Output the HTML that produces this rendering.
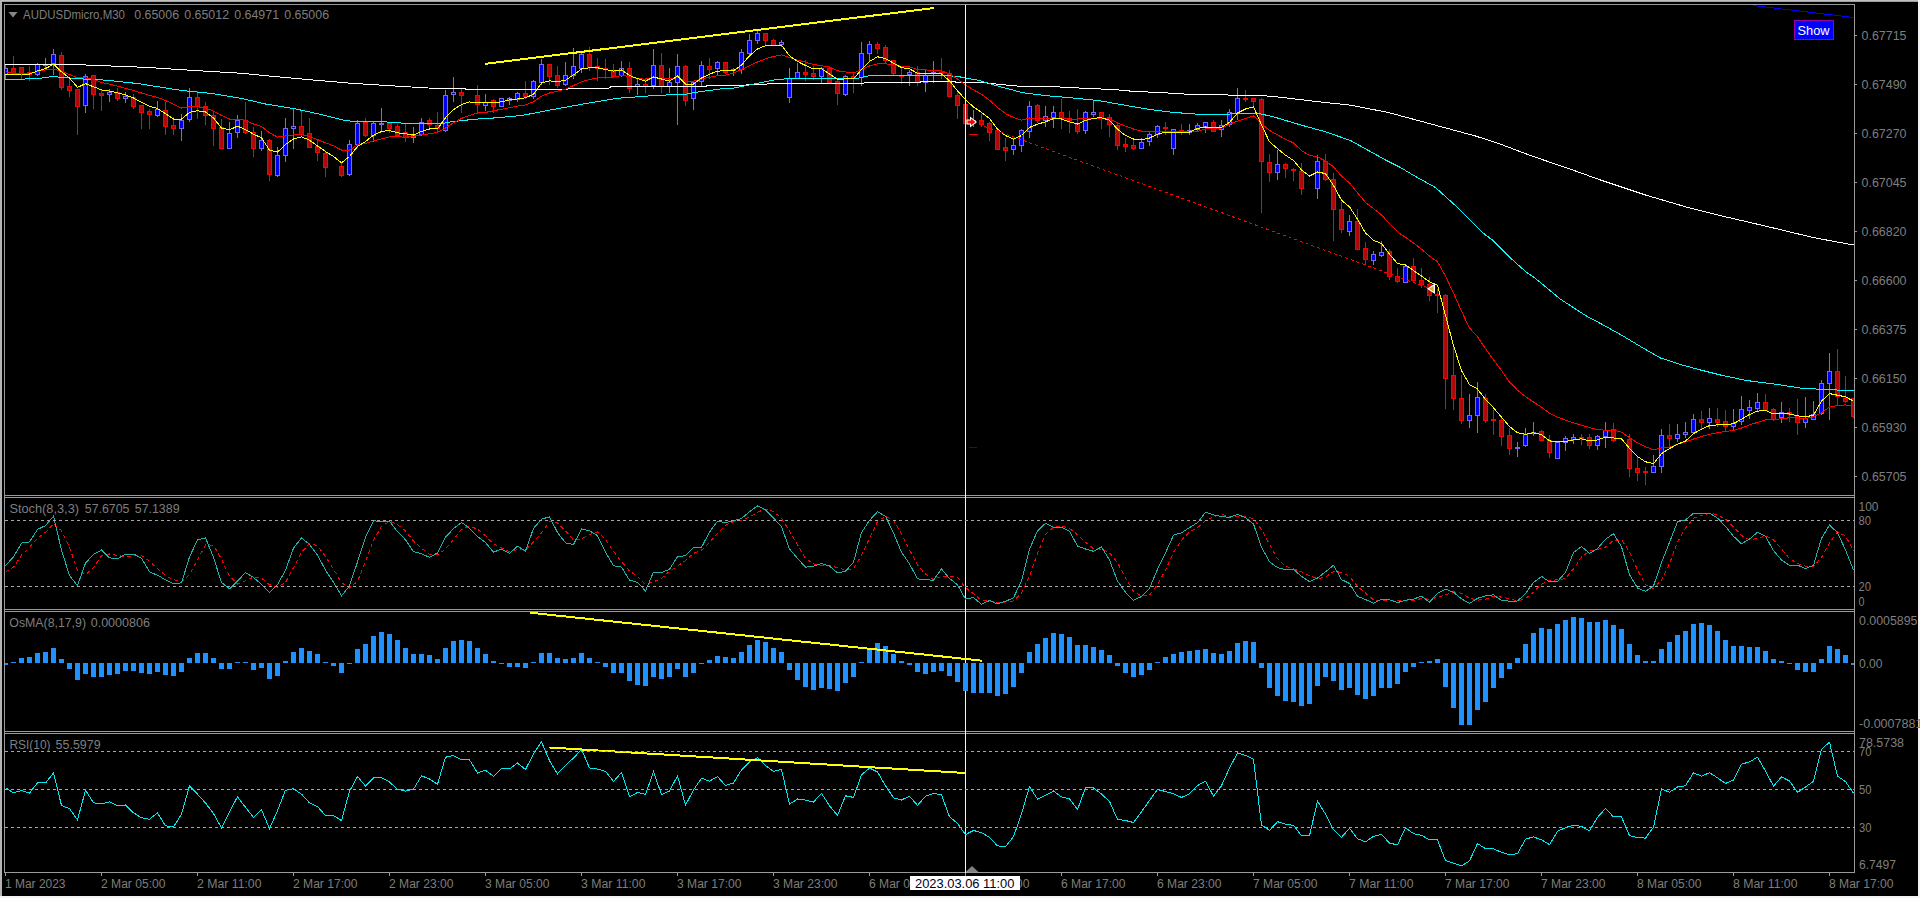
<!DOCTYPE html>
<html><head><meta charset="utf-8"><title>AUDUSDmicro,M30</title>
<style>html,body{margin:0;padding:0;background:#000;overflow:hidden}svg text{white-space:pre}</style></head>
<body>
<svg width="1920" height="898" viewBox="0 0 1920 898" style="display:block">
<rect width="1920" height="898" fill="#000"/>
<g shape-rendering="crispEdges">
<rect x="0" y="0" width="1920" height="1" fill="#c0c0c0"/>
<rect x="0" y="1" width="1920" height="1" fill="#a0a0a0"/>
<rect x="0" y="0" width="2" height="898" fill="#b4b4b4"/>
<rect x="1918" y="0" width="2" height="898" fill="#f4f4f4"/>
<rect x="0" y="896" width="1920" height="2" fill="#f4f4f4"/>
<rect x="4" y="4" width="1851" height="1" fill="#9a9a9a"/>
<rect x="4" y="4" width="1" height="869" fill="#9a9a9a"/>
<rect x="1854" y="4" width="1" height="869" fill="#9a9a9a"/>
<rect x="4" y="495" width="1851" height="1" fill="#9a9a9a"/>
<rect x="4" y="497" width="1851" height="1" fill="#9a9a9a"/>
<rect x="4" y="609" width="1851" height="1" fill="#9a9a9a"/>
<rect x="4" y="611" width="1851" height="1" fill="#9a9a9a"/>
<rect x="4" y="731" width="1851" height="1" fill="#9a9a9a"/>
<rect x="4" y="733" width="1851" height="1" fill="#9a9a9a"/>
<rect x="4" y="872" width="1851" height="1" fill="#9a9a9a"/>
</g>
<defs><clipPath id="cm"><rect x="5" y="5" width="1849" height="490"/></clipPath>
<clipPath id="c1"><rect x="5" y="498" width="1849" height="111"/></clipPath>
<clipPath id="c2"><rect x="5" y="612" width="1849" height="119"/></clipPath>
<clipPath id="c3"><rect x="5" y="734" width="1849" height="138"/></clipPath></defs>
<g clip-path="url(#cm)" shape-rendering="crispEdges">
<rect x="5" y="64" width="1" height="15" fill="#7b68ee"/>
<rect x="3" y="68" width="5" height="7" fill="#7b68ee"/>
<rect x="4" y="69" width="3" height="5" fill="#0000f0"/>
<rect x="13" y="56" width="1" height="18" fill="#ff0000"/>
<rect x="11" y="68" width="5" height="6" fill="#ff0000"/>
<rect x="12" y="69" width="3" height="4" fill="#b00808"/>
<rect x="21" y="67" width="1" height="12" fill="#ff0000"/>
<rect x="19" y="67" width="5" height="7" fill="#ff0000"/>
<rect x="20" y="68" width="3" height="5" fill="#b00808"/>
<rect x="29" y="66" width="1" height="15" fill="#ff0000"/>
<rect x="27" y="72" width="5" height="3" fill="#ff0000"/>
<rect x="28" y="73" width="3" height="1" fill="#b00808"/>
<rect x="37" y="63" width="1" height="13" fill="#7b68ee"/>
<rect x="35" y="64" width="5" height="11" fill="#7b68ee"/>
<rect x="36" y="65" width="3" height="9" fill="#0000f0"/>
<rect x="45" y="58" width="1" height="11" fill="#7b68ee"/>
<rect x="43" y="64" width="5" height="2" fill="#7b68ee"/>
<rect x="53" y="49" width="1" height="26" fill="#7b68ee"/>
<rect x="51" y="54" width="5" height="10" fill="#7b68ee"/>
<rect x="52" y="55" width="3" height="8" fill="#0000f0"/>
<rect x="61" y="52" width="1" height="38" fill="#ff0000"/>
<rect x="59" y="55" width="5" height="33" fill="#ff0000"/>
<rect x="60" y="56" width="3" height="31" fill="#b00808"/>
<rect x="69" y="79" width="1" height="18" fill="#ff0000"/>
<rect x="67" y="86" width="5" height="5" fill="#ff0000"/>
<rect x="68" y="87" width="3" height="3" fill="#b00808"/>
<rect x="77" y="89" width="1" height="46" fill="#ff0000"/>
<rect x="75" y="89" width="5" height="18" fill="#ff0000"/>
<rect x="76" y="90" width="3" height="16" fill="#b00808"/>
<rect x="85" y="74" width="1" height="39" fill="#7b68ee"/>
<rect x="83" y="76" width="5" height="30" fill="#7b68ee"/>
<rect x="84" y="77" width="3" height="28" fill="#0000f0"/>
<rect x="93" y="75" width="1" height="34" fill="#ff0000"/>
<rect x="91" y="75" width="5" height="20" fill="#ff0000"/>
<rect x="92" y="76" width="3" height="18" fill="#b00808"/>
<rect x="101" y="89" width="1" height="22" fill="#ff0000"/>
<rect x="99" y="93" width="5" height="3" fill="#ff0000"/>
<rect x="100" y="94" width="3" height="1" fill="#b00808"/>
<rect x="109" y="89" width="1" height="13" fill="#7b68ee"/>
<rect x="107" y="92" width="5" height="3" fill="#7b68ee"/>
<rect x="108" y="93" width="3" height="1" fill="#0000f0"/>
<rect x="117" y="88" width="1" height="13" fill="#ff0000"/>
<rect x="115" y="92" width="5" height="7" fill="#ff0000"/>
<rect x="116" y="93" width="3" height="5" fill="#b00808"/>
<rect x="125" y="92" width="1" height="11" fill="#7b68ee"/>
<rect x="123" y="96" width="5" height="3" fill="#7b68ee"/>
<rect x="124" y="97" width="3" height="1" fill="#0000f0"/>
<rect x="133" y="94" width="1" height="15" fill="#ff0000"/>
<rect x="131" y="97" width="5" height="10" fill="#ff0000"/>
<rect x="132" y="98" width="3" height="8" fill="#b00808"/>
<rect x="141" y="105" width="1" height="24" fill="#ff0000"/>
<rect x="139" y="105" width="5" height="8" fill="#ff0000"/>
<rect x="140" y="106" width="3" height="6" fill="#b00808"/>
<rect x="149" y="109" width="1" height="20" fill="#ff0000"/>
<rect x="147" y="111" width="5" height="4" fill="#ff0000"/>
<rect x="148" y="112" width="3" height="2" fill="#b00808"/>
<rect x="157" y="101" width="1" height="16" fill="#7b68ee"/>
<rect x="155" y="109" width="5" height="7" fill="#7b68ee"/>
<rect x="156" y="110" width="3" height="5" fill="#0000f0"/>
<rect x="165" y="102" width="1" height="33" fill="#ff0000"/>
<rect x="163" y="110" width="5" height="17" fill="#ff0000"/>
<rect x="164" y="111" width="3" height="15" fill="#b00808"/>
<rect x="173" y="117" width="1" height="18" fill="#ff0000"/>
<rect x="171" y="125" width="5" height="4" fill="#ff0000"/>
<rect x="172" y="126" width="3" height="2" fill="#b00808"/>
<rect x="181" y="114" width="1" height="27" fill="#7b68ee"/>
<rect x="179" y="120" width="5" height="9" fill="#7b68ee"/>
<rect x="180" y="121" width="3" height="7" fill="#0000f0"/>
<rect x="189" y="88" width="1" height="34" fill="#7b68ee"/>
<rect x="187" y="97" width="5" height="23" fill="#7b68ee"/>
<rect x="188" y="98" width="3" height="21" fill="#0000f0"/>
<rect x="197" y="91" width="1" height="28" fill="#ff0000"/>
<rect x="195" y="97" width="5" height="10" fill="#ff0000"/>
<rect x="196" y="98" width="3" height="8" fill="#b00808"/>
<rect x="205" y="102" width="1" height="23" fill="#ff0000"/>
<rect x="203" y="106" width="5" height="10" fill="#ff0000"/>
<rect x="204" y="107" width="3" height="8" fill="#b00808"/>
<rect x="213" y="112" width="1" height="34" fill="#ff0000"/>
<rect x="211" y="115" width="5" height="14" fill="#ff0000"/>
<rect x="212" y="116" width="3" height="12" fill="#b00808"/>
<rect x="221" y="119" width="1" height="30" fill="#ff0000"/>
<rect x="219" y="127" width="5" height="22" fill="#ff0000"/>
<rect x="220" y="128" width="3" height="20" fill="#b00808"/>
<rect x="229" y="122" width="1" height="27" fill="#7b68ee"/>
<rect x="227" y="133" width="5" height="16" fill="#7b68ee"/>
<rect x="228" y="134" width="3" height="14" fill="#0000f0"/>
<rect x="237" y="115" width="1" height="23" fill="#7b68ee"/>
<rect x="235" y="120" width="5" height="13" fill="#7b68ee"/>
<rect x="236" y="121" width="3" height="11" fill="#0000f0"/>
<rect x="245" y="102" width="1" height="32" fill="#ff0000"/>
<rect x="243" y="120" width="5" height="13" fill="#ff0000"/>
<rect x="244" y="121" width="3" height="11" fill="#b00808"/>
<rect x="253" y="127" width="1" height="30" fill="#ff0000"/>
<rect x="251" y="132" width="5" height="17" fill="#ff0000"/>
<rect x="252" y="133" width="3" height="15" fill="#b00808"/>
<rect x="261" y="131" width="1" height="20" fill="#7b68ee"/>
<rect x="259" y="140" width="5" height="9" fill="#7b68ee"/>
<rect x="260" y="141" width="3" height="7" fill="#0000f0"/>
<rect x="269" y="139" width="1" height="42" fill="#ff0000"/>
<rect x="267" y="140" width="5" height="35" fill="#ff0000"/>
<rect x="268" y="141" width="3" height="33" fill="#b00808"/>
<rect x="277" y="147" width="1" height="30" fill="#7b68ee"/>
<rect x="275" y="155" width="5" height="21" fill="#7b68ee"/>
<rect x="276" y="156" width="3" height="19" fill="#0000f0"/>
<rect x="285" y="118" width="1" height="44" fill="#7b68ee"/>
<rect x="283" y="128" width="5" height="28" fill="#7b68ee"/>
<rect x="284" y="129" width="3" height="26" fill="#0000f0"/>
<rect x="293" y="109" width="1" height="40" fill="#7b68ee"/>
<rect x="291" y="126" width="5" height="3" fill="#7b68ee"/>
<rect x="292" y="127" width="3" height="1" fill="#0000f0"/>
<rect x="301" y="110" width="1" height="26" fill="#ff0000"/>
<rect x="299" y="126" width="5" height="9" fill="#ff0000"/>
<rect x="300" y="127" width="3" height="7" fill="#b00808"/>
<rect x="309" y="118" width="1" height="30" fill="#ff0000"/>
<rect x="307" y="133" width="5" height="15" fill="#ff0000"/>
<rect x="308" y="134" width="3" height="13" fill="#b00808"/>
<rect x="317" y="139" width="1" height="22" fill="#ff0000"/>
<rect x="315" y="146" width="5" height="7" fill="#ff0000"/>
<rect x="316" y="147" width="3" height="5" fill="#b00808"/>
<rect x="325" y="152" width="1" height="25" fill="#ff0000"/>
<rect x="323" y="153" width="5" height="15" fill="#ff0000"/>
<rect x="324" y="154" width="3" height="13" fill="#b00808"/>
<rect x="341" y="162" width="1" height="15" fill="#ff0000"/>
<rect x="339" y="166" width="5" height="10" fill="#ff0000"/>
<rect x="340" y="167" width="3" height="8" fill="#b00808"/>
<rect x="349" y="140" width="1" height="36" fill="#7b68ee"/>
<rect x="347" y="144" width="5" height="31" fill="#7b68ee"/>
<rect x="348" y="145" width="3" height="29" fill="#0000f0"/>
<rect x="357" y="120" width="1" height="28" fill="#7b68ee"/>
<rect x="355" y="123" width="5" height="22" fill="#7b68ee"/>
<rect x="356" y="124" width="3" height="20" fill="#0000f0"/>
<rect x="365" y="118" width="1" height="19" fill="#ff0000"/>
<rect x="363" y="122" width="5" height="14" fill="#ff0000"/>
<rect x="364" y="123" width="3" height="12" fill="#b00808"/>
<rect x="373" y="122" width="1" height="20" fill="#7b68ee"/>
<rect x="371" y="123" width="5" height="13" fill="#7b68ee"/>
<rect x="372" y="124" width="3" height="11" fill="#0000f0"/>
<rect x="381" y="108" width="1" height="23" fill="#7b68ee"/>
<rect x="379" y="123" width="5" height="2" fill="#7b68ee"/>
<rect x="389" y="123" width="1" height="10" fill="#ff0000"/>
<rect x="387" y="123" width="5" height="6" fill="#ff0000"/>
<rect x="388" y="124" width="3" height="4" fill="#b00808"/>
<rect x="397" y="124" width="1" height="13" fill="#ff0000"/>
<rect x="395" y="126" width="5" height="10" fill="#ff0000"/>
<rect x="396" y="127" width="3" height="8" fill="#b00808"/>
<rect x="405" y="124" width="1" height="18" fill="#ff0000"/>
<rect x="403" y="132" width="5" height="6" fill="#ff0000"/>
<rect x="404" y="133" width="3" height="4" fill="#b00808"/>
<rect x="413" y="127" width="1" height="16" fill="#7b68ee"/>
<rect x="411" y="135" width="5" height="3" fill="#7b68ee"/>
<rect x="412" y="136" width="3" height="1" fill="#0000f0"/>
<rect x="421" y="118" width="1" height="18" fill="#7b68ee"/>
<rect x="419" y="122" width="5" height="13" fill="#7b68ee"/>
<rect x="420" y="123" width="3" height="11" fill="#0000f0"/>
<rect x="429" y="118" width="1" height="11" fill="#ff0000"/>
<rect x="427" y="120" width="5" height="5" fill="#ff0000"/>
<rect x="428" y="121" width="3" height="3" fill="#b00808"/>
<rect x="437" y="112" width="1" height="20" fill="#ff0000"/>
<rect x="435" y="125" width="5" height="4" fill="#ff0000"/>
<rect x="436" y="126" width="3" height="2" fill="#b00808"/>
<rect x="445" y="90" width="1" height="42" fill="#7b68ee"/>
<rect x="443" y="95" width="5" height="36" fill="#7b68ee"/>
<rect x="444" y="96" width="3" height="34" fill="#0000f0"/>
<rect x="453" y="77" width="1" height="25" fill="#7b68ee"/>
<rect x="451" y="92" width="5" height="3" fill="#7b68ee"/>
<rect x="452" y="93" width="3" height="1" fill="#0000f0"/>
<rect x="461" y="88" width="1" height="25" fill="#ff0000"/>
<rect x="459" y="92" width="5" height="4" fill="#ff0000"/>
<rect x="460" y="93" width="3" height="2" fill="#b00808"/>
<rect x="477" y="85" width="1" height="27" fill="#ff0000"/>
<rect x="475" y="95" width="5" height="10" fill="#ff0000"/>
<rect x="476" y="96" width="3" height="8" fill="#b00808"/>
<rect x="485" y="94" width="1" height="17" fill="#7b68ee"/>
<rect x="483" y="102" width="5" height="4" fill="#7b68ee"/>
<rect x="484" y="103" width="3" height="2" fill="#0000f0"/>
<rect x="493" y="99" width="1" height="14" fill="#ff0000"/>
<rect x="491" y="100" width="5" height="7" fill="#ff0000"/>
<rect x="492" y="101" width="3" height="5" fill="#b00808"/>
<rect x="501" y="98" width="1" height="9" fill="#7b68ee"/>
<rect x="499" y="98" width="5" height="9" fill="#7b68ee"/>
<rect x="500" y="99" width="3" height="7" fill="#0000f0"/>
<rect x="509" y="97" width="1" height="8" fill="#7b68ee"/>
<rect x="507" y="98" width="5" height="3" fill="#7b68ee"/>
<rect x="508" y="99" width="3" height="1" fill="#0000f0"/>
<rect x="517" y="92" width="1" height="10" fill="#7b68ee"/>
<rect x="515" y="93" width="5" height="7" fill="#7b68ee"/>
<rect x="516" y="94" width="3" height="5" fill="#0000f0"/>
<rect x="525" y="81" width="1" height="18" fill="#ff0000"/>
<rect x="523" y="93" width="5" height="4" fill="#ff0000"/>
<rect x="524" y="94" width="3" height="2" fill="#b00808"/>
<rect x="533" y="80" width="1" height="19" fill="#7b68ee"/>
<rect x="531" y="81" width="5" height="16" fill="#7b68ee"/>
<rect x="532" y="82" width="3" height="14" fill="#0000f0"/>
<rect x="541" y="59" width="1" height="26" fill="#7b68ee"/>
<rect x="539" y="64" width="5" height="19" fill="#7b68ee"/>
<rect x="540" y="65" width="3" height="17" fill="#0000f0"/>
<rect x="549" y="64" width="1" height="21" fill="#ff0000"/>
<rect x="547" y="64" width="5" height="13" fill="#ff0000"/>
<rect x="548" y="65" width="3" height="11" fill="#b00808"/>
<rect x="557" y="66" width="1" height="22" fill="#ff0000"/>
<rect x="555" y="75" width="5" height="11" fill="#ff0000"/>
<rect x="556" y="76" width="3" height="9" fill="#b00808"/>
<rect x="565" y="62" width="1" height="24" fill="#7b68ee"/>
<rect x="563" y="75" width="5" height="10" fill="#7b68ee"/>
<rect x="564" y="76" width="3" height="8" fill="#0000f0"/>
<rect x="573" y="48" width="1" height="31" fill="#7b68ee"/>
<rect x="571" y="66" width="5" height="10" fill="#7b68ee"/>
<rect x="572" y="67" width="3" height="8" fill="#0000f0"/>
<rect x="581" y="51" width="1" height="22" fill="#7b68ee"/>
<rect x="579" y="54" width="5" height="15" fill="#7b68ee"/>
<rect x="580" y="55" width="3" height="13" fill="#0000f0"/>
<rect x="589" y="47" width="1" height="24" fill="#ff0000"/>
<rect x="587" y="54" width="5" height="14" fill="#ff0000"/>
<rect x="588" y="55" width="3" height="12" fill="#b00808"/>
<rect x="597" y="58" width="1" height="23" fill="#ff0000"/>
<rect x="595" y="66" width="5" height="3" fill="#ff0000"/>
<rect x="596" y="67" width="3" height="1" fill="#b00808"/>
<rect x="605" y="59" width="1" height="20" fill="#ff0000"/>
<rect x="603" y="68" width="5" height="2" fill="#ff0000"/>
<rect x="613" y="64" width="1" height="14" fill="#ff0000"/>
<rect x="611" y="70" width="5" height="7" fill="#ff0000"/>
<rect x="612" y="71" width="3" height="5" fill="#b00808"/>
<rect x="621" y="61" width="1" height="16" fill="#7b68ee"/>
<rect x="619" y="68" width="5" height="8" fill="#7b68ee"/>
<rect x="620" y="69" width="3" height="6" fill="#0000f0"/>
<rect x="629" y="62" width="1" height="31" fill="#ff0000"/>
<rect x="627" y="68" width="5" height="21" fill="#ff0000"/>
<rect x="628" y="69" width="3" height="19" fill="#b00808"/>
<rect x="637" y="79" width="1" height="16" fill="#7b68ee"/>
<rect x="635" y="84" width="5" height="3" fill="#7b68ee"/>
<rect x="636" y="85" width="3" height="1" fill="#0000f0"/>
<rect x="645" y="78" width="1" height="15" fill="#ff0000"/>
<rect x="643" y="84" width="5" height="3" fill="#ff0000"/>
<rect x="644" y="85" width="3" height="1" fill="#b00808"/>
<rect x="653" y="49" width="1" height="40" fill="#7b68ee"/>
<rect x="651" y="65" width="5" height="21" fill="#7b68ee"/>
<rect x="652" y="66" width="3" height="19" fill="#0000f0"/>
<rect x="661" y="53" width="1" height="40" fill="#ff0000"/>
<rect x="659" y="65" width="5" height="22" fill="#ff0000"/>
<rect x="660" y="66" width="3" height="20" fill="#b00808"/>
<rect x="669" y="68" width="1" height="25" fill="#7b68ee"/>
<rect x="667" y="82" width="5" height="5" fill="#7b68ee"/>
<rect x="668" y="83" width="3" height="3" fill="#0000f0"/>
<rect x="677" y="54" width="1" height="71" fill="#7b68ee"/>
<rect x="675" y="66" width="5" height="17" fill="#7b68ee"/>
<rect x="676" y="67" width="3" height="15" fill="#0000f0"/>
<rect x="685" y="65" width="1" height="41" fill="#ff0000"/>
<rect x="683" y="66" width="5" height="35" fill="#ff0000"/>
<rect x="684" y="67" width="3" height="33" fill="#b00808"/>
<rect x="693" y="81" width="1" height="29" fill="#7b68ee"/>
<rect x="691" y="82" width="5" height="17" fill="#7b68ee"/>
<rect x="692" y="83" width="3" height="15" fill="#0000f0"/>
<rect x="701" y="61" width="1" height="25" fill="#7b68ee"/>
<rect x="699" y="65" width="5" height="17" fill="#7b68ee"/>
<rect x="700" y="66" width="3" height="15" fill="#0000f0"/>
<rect x="709" y="58" width="1" height="21" fill="#ff0000"/>
<rect x="707" y="66" width="5" height="4" fill="#ff0000"/>
<rect x="708" y="67" width="3" height="2" fill="#b00808"/>
<rect x="717" y="61" width="1" height="14" fill="#7b68ee"/>
<rect x="715" y="62" width="5" height="7" fill="#7b68ee"/>
<rect x="716" y="63" width="3" height="5" fill="#0000f0"/>
<rect x="725" y="62" width="1" height="12" fill="#ff0000"/>
<rect x="723" y="62" width="5" height="11" fill="#ff0000"/>
<rect x="724" y="63" width="3" height="9" fill="#b00808"/>
<rect x="733" y="68" width="1" height="8" fill="#7b68ee"/>
<rect x="731" y="69" width="5" height="2" fill="#7b68ee"/>
<rect x="741" y="49" width="1" height="25" fill="#7b68ee"/>
<rect x="739" y="52" width="5" height="18" fill="#7b68ee"/>
<rect x="740" y="53" width="3" height="16" fill="#0000f0"/>
<rect x="749" y="34" width="1" height="21" fill="#7b68ee"/>
<rect x="747" y="40" width="5" height="14" fill="#7b68ee"/>
<rect x="748" y="41" width="3" height="12" fill="#0000f0"/>
<rect x="757" y="31" width="1" height="13" fill="#7b68ee"/>
<rect x="755" y="33" width="5" height="8" fill="#7b68ee"/>
<rect x="756" y="34" width="3" height="6" fill="#0000f0"/>
<rect x="765" y="33" width="1" height="12" fill="#ff0000"/>
<rect x="763" y="33" width="5" height="8" fill="#ff0000"/>
<rect x="764" y="34" width="3" height="6" fill="#b00808"/>
<rect x="773" y="39" width="1" height="7" fill="#ff0000"/>
<rect x="771" y="40" width="5" height="6" fill="#ff0000"/>
<rect x="772" y="41" width="3" height="4" fill="#b00808"/>
<rect x="781" y="40" width="1" height="7" fill="#7b68ee"/>
<rect x="779" y="42" width="5" height="3" fill="#7b68ee"/>
<rect x="780" y="43" width="3" height="1" fill="#0000f0"/>
<rect x="789" y="68" width="1" height="35" fill="#7b68ee"/>
<rect x="787" y="78" width="5" height="20" fill="#7b68ee"/>
<rect x="788" y="79" width="3" height="18" fill="#0000f0"/>
<rect x="797" y="63" width="1" height="16" fill="#7b68ee"/>
<rect x="795" y="72" width="5" height="7" fill="#7b68ee"/>
<rect x="796" y="73" width="3" height="5" fill="#0000f0"/>
<rect x="805" y="60" width="1" height="21" fill="#ff0000"/>
<rect x="803" y="72" width="5" height="3" fill="#ff0000"/>
<rect x="804" y="73" width="3" height="1" fill="#b00808"/>
<rect x="813" y="66" width="1" height="14" fill="#ff0000"/>
<rect x="811" y="73" width="5" height="4" fill="#ff0000"/>
<rect x="812" y="74" width="3" height="2" fill="#b00808"/>
<rect x="821" y="67" width="1" height="16" fill="#7b68ee"/>
<rect x="819" y="68" width="5" height="9" fill="#7b68ee"/>
<rect x="820" y="69" width="3" height="7" fill="#0000f0"/>
<rect x="829" y="67" width="1" height="16" fill="#ff0000"/>
<rect x="827" y="68" width="5" height="15" fill="#ff0000"/>
<rect x="828" y="69" width="3" height="13" fill="#b00808"/>
<rect x="837" y="80" width="1" height="25" fill="#ff0000"/>
<rect x="835" y="81" width="5" height="13" fill="#ff0000"/>
<rect x="836" y="82" width="3" height="11" fill="#b00808"/>
<rect x="845" y="75" width="1" height="21" fill="#7b68ee"/>
<rect x="843" y="76" width="5" height="19" fill="#7b68ee"/>
<rect x="844" y="77" width="3" height="17" fill="#0000f0"/>
<rect x="853" y="72" width="1" height="21" fill="#ff0000"/>
<rect x="851" y="76" width="5" height="3" fill="#ff0000"/>
<rect x="852" y="77" width="3" height="1" fill="#b00808"/>
<rect x="861" y="42" width="1" height="44" fill="#7b68ee"/>
<rect x="859" y="53" width="5" height="25" fill="#7b68ee"/>
<rect x="860" y="54" width="3" height="23" fill="#0000f0"/>
<rect x="869" y="41" width="1" height="20" fill="#7b68ee"/>
<rect x="867" y="44" width="5" height="10" fill="#7b68ee"/>
<rect x="868" y="45" width="3" height="8" fill="#0000f0"/>
<rect x="877" y="42" width="1" height="12" fill="#ff0000"/>
<rect x="875" y="44" width="5" height="5" fill="#ff0000"/>
<rect x="876" y="45" width="3" height="3" fill="#b00808"/>
<rect x="885" y="45" width="1" height="19" fill="#ff0000"/>
<rect x="883" y="47" width="5" height="14" fill="#ff0000"/>
<rect x="884" y="48" width="3" height="12" fill="#b00808"/>
<rect x="893" y="60" width="1" height="15" fill="#ff0000"/>
<rect x="891" y="60" width="5" height="14" fill="#ff0000"/>
<rect x="892" y="61" width="3" height="12" fill="#b00808"/>
<rect x="901" y="68" width="1" height="16" fill="#ff0000"/>
<rect x="899" y="75" width="5" height="2" fill="#ff0000"/>
<rect x="909" y="70" width="1" height="16" fill="#7b68ee"/>
<rect x="907" y="72" width="5" height="3" fill="#7b68ee"/>
<rect x="908" y="73" width="3" height="1" fill="#0000f0"/>
<rect x="917" y="66" width="1" height="20" fill="#ff0000"/>
<rect x="915" y="72" width="5" height="11" fill="#ff0000"/>
<rect x="916" y="73" width="3" height="9" fill="#b00808"/>
<rect x="925" y="70" width="1" height="22" fill="#7b68ee"/>
<rect x="923" y="75" width="5" height="8" fill="#7b68ee"/>
<rect x="924" y="76" width="3" height="6" fill="#0000f0"/>
<rect x="933" y="61" width="1" height="22" fill="#7b68ee"/>
<rect x="931" y="72" width="5" height="2" fill="#7b68ee"/>
<rect x="941" y="58" width="1" height="21" fill="#ff0000"/>
<rect x="939" y="72" width="5" height="2" fill="#ff0000"/>
<rect x="949" y="70" width="1" height="27" fill="#ff0000"/>
<rect x="947" y="73" width="5" height="24" fill="#ff0000"/>
<rect x="948" y="74" width="3" height="22" fill="#b00808"/>
<rect x="957" y="93" width="1" height="26" fill="#ff0000"/>
<rect x="955" y="95" width="5" height="11" fill="#ff0000"/>
<rect x="956" y="96" width="3" height="9" fill="#b00808"/>
<rect x="965" y="104" width="1" height="21" fill="#ff0000"/>
<rect x="963" y="104" width="5" height="20" fill="#ff0000"/>
<rect x="964" y="105" width="3" height="18" fill="#b00808"/>
<rect x="973" y="110" width="1" height="17" fill="#7b68ee"/>
<rect x="971" y="120" width="5" height="3" fill="#7b68ee"/>
<rect x="972" y="121" width="3" height="1" fill="#0000f0"/>
<rect x="981" y="114" width="1" height="13" fill="#ff0000"/>
<rect x="979" y="120" width="5" height="5" fill="#ff0000"/>
<rect x="980" y="121" width="3" height="3" fill="#b00808"/>
<rect x="989" y="122" width="1" height="19" fill="#ff0000"/>
<rect x="987" y="123" width="5" height="10" fill="#ff0000"/>
<rect x="988" y="124" width="3" height="8" fill="#b00808"/>
<rect x="997" y="129" width="1" height="21" fill="#ff0000"/>
<rect x="995" y="130" width="5" height="20" fill="#ff0000"/>
<rect x="996" y="131" width="3" height="18" fill="#b00808"/>
<rect x="1005" y="138" width="1" height="23" fill="#ff0000"/>
<rect x="1003" y="147" width="5" height="4" fill="#ff0000"/>
<rect x="1004" y="148" width="3" height="2" fill="#b00808"/>
<rect x="1013" y="138" width="1" height="17" fill="#7b68ee"/>
<rect x="1011" y="145" width="5" height="5" fill="#7b68ee"/>
<rect x="1012" y="146" width="3" height="3" fill="#0000f0"/>
<rect x="1021" y="129" width="1" height="23" fill="#7b68ee"/>
<rect x="1019" y="130" width="5" height="16" fill="#7b68ee"/>
<rect x="1020" y="131" width="3" height="14" fill="#0000f0"/>
<rect x="1029" y="101" width="1" height="37" fill="#7b68ee"/>
<rect x="1027" y="106" width="5" height="26" fill="#7b68ee"/>
<rect x="1028" y="107" width="3" height="24" fill="#0000f0"/>
<rect x="1037" y="104" width="1" height="19" fill="#ff0000"/>
<rect x="1035" y="105" width="5" height="16" fill="#ff0000"/>
<rect x="1036" y="106" width="3" height="14" fill="#b00808"/>
<rect x="1045" y="106" width="1" height="21" fill="#7b68ee"/>
<rect x="1043" y="116" width="5" height="5" fill="#7b68ee"/>
<rect x="1044" y="117" width="3" height="3" fill="#0000f0"/>
<rect x="1053" y="106" width="1" height="22" fill="#7b68ee"/>
<rect x="1051" y="112" width="5" height="6" fill="#7b68ee"/>
<rect x="1052" y="113" width="3" height="4" fill="#0000f0"/>
<rect x="1061" y="99" width="1" height="30" fill="#ff0000"/>
<rect x="1059" y="112" width="5" height="7" fill="#ff0000"/>
<rect x="1060" y="113" width="3" height="5" fill="#b00808"/>
<rect x="1069" y="111" width="1" height="22" fill="#ff0000"/>
<rect x="1067" y="118" width="5" height="3" fill="#ff0000"/>
<rect x="1068" y="119" width="3" height="1" fill="#b00808"/>
<rect x="1077" y="109" width="1" height="25" fill="#ff0000"/>
<rect x="1075" y="123" width="5" height="9" fill="#ff0000"/>
<rect x="1076" y="124" width="3" height="7" fill="#b00808"/>
<rect x="1085" y="111" width="1" height="23" fill="#7b68ee"/>
<rect x="1083" y="112" width="5" height="19" fill="#7b68ee"/>
<rect x="1084" y="113" width="3" height="17" fill="#0000f0"/>
<rect x="1093" y="100" width="1" height="17" fill="#7b68ee"/>
<rect x="1091" y="112" width="5" height="3" fill="#7b68ee"/>
<rect x="1092" y="113" width="3" height="1" fill="#0000f0"/>
<rect x="1101" y="112" width="1" height="17" fill="#ff0000"/>
<rect x="1099" y="112" width="5" height="7" fill="#ff0000"/>
<rect x="1100" y="113" width="3" height="5" fill="#b00808"/>
<rect x="1109" y="114" width="1" height="23" fill="#ff0000"/>
<rect x="1107" y="117" width="5" height="8" fill="#ff0000"/>
<rect x="1108" y="118" width="3" height="6" fill="#b00808"/>
<rect x="1117" y="122" width="1" height="28" fill="#ff0000"/>
<rect x="1115" y="125" width="5" height="21" fill="#ff0000"/>
<rect x="1116" y="126" width="3" height="19" fill="#b00808"/>
<rect x="1125" y="138" width="1" height="14" fill="#ff0000"/>
<rect x="1123" y="144" width="5" height="3" fill="#ff0000"/>
<rect x="1124" y="145" width="3" height="1" fill="#b00808"/>
<rect x="1133" y="138" width="1" height="12" fill="#ff0000"/>
<rect x="1131" y="145" width="5" height="4" fill="#ff0000"/>
<rect x="1132" y="146" width="3" height="2" fill="#b00808"/>
<rect x="1141" y="138" width="1" height="11" fill="#7b68ee"/>
<rect x="1139" y="142" width="5" height="7" fill="#7b68ee"/>
<rect x="1140" y="143" width="3" height="5" fill="#0000f0"/>
<rect x="1149" y="132" width="1" height="14" fill="#7b68ee"/>
<rect x="1147" y="134" width="5" height="8" fill="#7b68ee"/>
<rect x="1148" y="135" width="3" height="6" fill="#0000f0"/>
<rect x="1157" y="125" width="1" height="13" fill="#7b68ee"/>
<rect x="1155" y="126" width="5" height="9" fill="#7b68ee"/>
<rect x="1156" y="127" width="3" height="7" fill="#0000f0"/>
<rect x="1165" y="122" width="1" height="13" fill="#ff0000"/>
<rect x="1163" y="127" width="5" height="2" fill="#ff0000"/>
<rect x="1173" y="129" width="1" height="26" fill="#7b68ee"/>
<rect x="1171" y="129" width="5" height="20" fill="#7b68ee"/>
<rect x="1172" y="130" width="3" height="18" fill="#0000f0"/>
<rect x="1181" y="124" width="1" height="11" fill="#ff0000"/>
<rect x="1179" y="130" width="5" height="3" fill="#ff0000"/>
<rect x="1180" y="131" width="3" height="1" fill="#b00808"/>
<rect x="1189" y="124" width="1" height="11" fill="#7b68ee"/>
<rect x="1187" y="130" width="5" height="3" fill="#7b68ee"/>
<rect x="1188" y="131" width="3" height="1" fill="#0000f0"/>
<rect x="1197" y="123" width="1" height="8" fill="#7b68ee"/>
<rect x="1195" y="125" width="5" height="5" fill="#7b68ee"/>
<rect x="1196" y="126" width="3" height="3" fill="#0000f0"/>
<rect x="1205" y="122" width="1" height="11" fill="#7b68ee"/>
<rect x="1203" y="122" width="5" height="5" fill="#7b68ee"/>
<rect x="1204" y="123" width="3" height="3" fill="#0000f0"/>
<rect x="1213" y="120" width="1" height="12" fill="#ff0000"/>
<rect x="1211" y="122" width="5" height="10" fill="#ff0000"/>
<rect x="1212" y="123" width="3" height="8" fill="#b00808"/>
<rect x="1221" y="120" width="1" height="17" fill="#7b68ee"/>
<rect x="1219" y="125" width="5" height="5" fill="#7b68ee"/>
<rect x="1220" y="126" width="3" height="3" fill="#0000f0"/>
<rect x="1229" y="109" width="1" height="18" fill="#7b68ee"/>
<rect x="1227" y="112" width="5" height="13" fill="#7b68ee"/>
<rect x="1228" y="113" width="3" height="11" fill="#0000f0"/>
<rect x="1237" y="88" width="1" height="32" fill="#7b68ee"/>
<rect x="1235" y="98" width="5" height="16" fill="#7b68ee"/>
<rect x="1236" y="99" width="3" height="14" fill="#0000f0"/>
<rect x="1245" y="90" width="1" height="12" fill="#ff0000"/>
<rect x="1243" y="98" width="5" height="2" fill="#ff0000"/>
<rect x="1253" y="98" width="1" height="9" fill="#ff0000"/>
<rect x="1251" y="98" width="5" height="4" fill="#ff0000"/>
<rect x="1252" y="99" width="3" height="2" fill="#b00808"/>
<rect x="1261" y="98" width="1" height="115" fill="#ff0000"/>
<rect x="1259" y="99" width="5" height="63" fill="#ff0000"/>
<rect x="1260" y="100" width="3" height="61" fill="#b00808"/>
<rect x="1269" y="154" width="1" height="28" fill="#ff0000"/>
<rect x="1267" y="162" width="5" height="11" fill="#ff0000"/>
<rect x="1268" y="163" width="3" height="9" fill="#b00808"/>
<rect x="1277" y="150" width="1" height="30" fill="#7b68ee"/>
<rect x="1275" y="164" width="5" height="9" fill="#7b68ee"/>
<rect x="1276" y="165" width="3" height="7" fill="#0000f0"/>
<rect x="1285" y="163" width="1" height="15" fill="#ff0000"/>
<rect x="1283" y="164" width="5" height="5" fill="#ff0000"/>
<rect x="1284" y="165" width="3" height="3" fill="#b00808"/>
<rect x="1293" y="168" width="1" height="13" fill="#ff0000"/>
<rect x="1291" y="169" width="5" height="2" fill="#ff0000"/>
<rect x="1301" y="163" width="1" height="32" fill="#ff0000"/>
<rect x="1299" y="171" width="5" height="18" fill="#ff0000"/>
<rect x="1300" y="172" width="3" height="16" fill="#b00808"/>
<rect x="1317" y="155" width="1" height="44" fill="#7b68ee"/>
<rect x="1315" y="161" width="5" height="28" fill="#7b68ee"/>
<rect x="1316" y="162" width="3" height="26" fill="#0000f0"/>
<rect x="1325" y="154" width="1" height="27" fill="#ff0000"/>
<rect x="1323" y="161" width="5" height="19" fill="#ff0000"/>
<rect x="1324" y="162" width="3" height="17" fill="#b00808"/>
<rect x="1333" y="173" width="1" height="68" fill="#ff0000"/>
<rect x="1331" y="179" width="5" height="31" fill="#ff0000"/>
<rect x="1332" y="180" width="3" height="29" fill="#b00808"/>
<rect x="1341" y="202" width="1" height="31" fill="#ff0000"/>
<rect x="1339" y="209" width="5" height="21" fill="#ff0000"/>
<rect x="1340" y="210" width="3" height="19" fill="#b00808"/>
<rect x="1349" y="215" width="1" height="21" fill="#7b68ee"/>
<rect x="1347" y="221" width="5" height="11" fill="#7b68ee"/>
<rect x="1348" y="222" width="3" height="9" fill="#0000f0"/>
<rect x="1357" y="209" width="1" height="41" fill="#ff0000"/>
<rect x="1355" y="221" width="5" height="29" fill="#ff0000"/>
<rect x="1356" y="222" width="3" height="27" fill="#b00808"/>
<rect x="1365" y="242" width="1" height="23" fill="#ff0000"/>
<rect x="1363" y="248" width="5" height="12" fill="#ff0000"/>
<rect x="1364" y="249" width="3" height="10" fill="#b00808"/>
<rect x="1373" y="251" width="1" height="14" fill="#7b68ee"/>
<rect x="1371" y="254" width="5" height="7" fill="#7b68ee"/>
<rect x="1372" y="255" width="3" height="5" fill="#0000f0"/>
<rect x="1381" y="241" width="1" height="16" fill="#7b68ee"/>
<rect x="1379" y="252" width="5" height="4" fill="#7b68ee"/>
<rect x="1380" y="253" width="3" height="2" fill="#0000f0"/>
<rect x="1389" y="249" width="1" height="31" fill="#ff0000"/>
<rect x="1387" y="251" width="5" height="26" fill="#ff0000"/>
<rect x="1388" y="252" width="3" height="24" fill="#b00808"/>
<rect x="1397" y="268" width="1" height="15" fill="#ff0000"/>
<rect x="1395" y="276" width="5" height="6" fill="#ff0000"/>
<rect x="1396" y="277" width="3" height="4" fill="#b00808"/>
<rect x="1405" y="265" width="1" height="18" fill="#7b68ee"/>
<rect x="1403" y="266" width="5" height="17" fill="#7b68ee"/>
<rect x="1404" y="267" width="3" height="15" fill="#0000f0"/>
<rect x="1413" y="258" width="1" height="25" fill="#ff0000"/>
<rect x="1411" y="266" width="5" height="15" fill="#ff0000"/>
<rect x="1412" y="267" width="3" height="13" fill="#b00808"/>
<rect x="1421" y="268" width="1" height="20" fill="#ff0000"/>
<rect x="1419" y="280" width="5" height="5" fill="#ff0000"/>
<rect x="1420" y="281" width="3" height="3" fill="#b00808"/>
<rect x="1429" y="277" width="1" height="24" fill="#ff0000"/>
<rect x="1427" y="284" width="5" height="12" fill="#ff0000"/>
<rect x="1428" y="285" width="3" height="10" fill="#b00808"/>
<rect x="1437" y="289" width="1" height="24" fill="#ff0000"/>
<rect x="1435" y="294" width="5" height="2" fill="#ff0000"/>
<rect x="1445" y="294" width="1" height="115" fill="#ff0000"/>
<rect x="1443" y="295" width="5" height="84" fill="#ff0000"/>
<rect x="1444" y="296" width="3" height="82" fill="#b00808"/>
<rect x="1453" y="344" width="1" height="66" fill="#ff0000"/>
<rect x="1451" y="375" width="5" height="24" fill="#ff0000"/>
<rect x="1452" y="376" width="3" height="22" fill="#b00808"/>
<rect x="1461" y="375" width="1" height="49" fill="#ff0000"/>
<rect x="1459" y="398" width="5" height="23" fill="#ff0000"/>
<rect x="1460" y="399" width="3" height="21" fill="#b00808"/>
<rect x="1469" y="394" width="1" height="34" fill="#7b68ee"/>
<rect x="1467" y="415" width="5" height="6" fill="#7b68ee"/>
<rect x="1468" y="416" width="3" height="4" fill="#0000f0"/>
<rect x="1477" y="382" width="1" height="51" fill="#7b68ee"/>
<rect x="1475" y="397" width="5" height="19" fill="#7b68ee"/>
<rect x="1476" y="398" width="3" height="17" fill="#0000f0"/>
<rect x="1485" y="394" width="1" height="29" fill="#ff0000"/>
<rect x="1483" y="398" width="5" height="23" fill="#ff0000"/>
<rect x="1484" y="399" width="3" height="21" fill="#b00808"/>
<rect x="1493" y="410" width="1" height="25" fill="#ff0000"/>
<rect x="1491" y="419" width="5" height="2" fill="#ff0000"/>
<rect x="1501" y="417" width="1" height="29" fill="#ff0000"/>
<rect x="1499" y="420" width="5" height="17" fill="#ff0000"/>
<rect x="1500" y="421" width="3" height="15" fill="#b00808"/>
<rect x="1509" y="428" width="1" height="27" fill="#ff0000"/>
<rect x="1507" y="435" width="5" height="14" fill="#ff0000"/>
<rect x="1508" y="436" width="3" height="12" fill="#b00808"/>
<rect x="1517" y="442" width="1" height="15" fill="#7b68ee"/>
<rect x="1515" y="447" width="5" height="2" fill="#7b68ee"/>
<rect x="1525" y="428" width="1" height="19" fill="#7b68ee"/>
<rect x="1523" y="434" width="5" height="12" fill="#7b68ee"/>
<rect x="1524" y="435" width="3" height="10" fill="#0000f0"/>
<rect x="1533" y="422" width="1" height="14" fill="#7b68ee"/>
<rect x="1531" y="432" width="5" height="2" fill="#7b68ee"/>
<rect x="1541" y="430" width="1" height="11" fill="#ff0000"/>
<rect x="1539" y="431" width="5" height="10" fill="#ff0000"/>
<rect x="1540" y="432" width="3" height="8" fill="#b00808"/>
<rect x="1549" y="435" width="1" height="23" fill="#ff0000"/>
<rect x="1547" y="440" width="5" height="13" fill="#ff0000"/>
<rect x="1548" y="441" width="3" height="11" fill="#b00808"/>
<rect x="1557" y="441" width="1" height="18" fill="#7b68ee"/>
<rect x="1555" y="442" width="5" height="17" fill="#7b68ee"/>
<rect x="1556" y="443" width="3" height="15" fill="#0000f0"/>
<rect x="1565" y="436" width="1" height="15" fill="#7b68ee"/>
<rect x="1563" y="438" width="5" height="5" fill="#7b68ee"/>
<rect x="1564" y="439" width="3" height="3" fill="#0000f0"/>
<rect x="1573" y="434" width="1" height="10" fill="#7b68ee"/>
<rect x="1571" y="437" width="5" height="3" fill="#7b68ee"/>
<rect x="1572" y="438" width="3" height="1" fill="#0000f0"/>
<rect x="1581" y="434" width="1" height="11" fill="#ff0000"/>
<rect x="1579" y="437" width="5" height="2" fill="#ff0000"/>
<rect x="1589" y="434" width="1" height="15" fill="#ff0000"/>
<rect x="1587" y="437" width="5" height="9" fill="#ff0000"/>
<rect x="1588" y="438" width="3" height="7" fill="#b00808"/>
<rect x="1597" y="435" width="1" height="15" fill="#7b68ee"/>
<rect x="1595" y="436" width="5" height="10" fill="#7b68ee"/>
<rect x="1596" y="437" width="3" height="8" fill="#0000f0"/>
<rect x="1605" y="422" width="1" height="26" fill="#7b68ee"/>
<rect x="1603" y="430" width="5" height="7" fill="#7b68ee"/>
<rect x="1604" y="431" width="3" height="5" fill="#0000f0"/>
<rect x="1613" y="423" width="1" height="19" fill="#ff0000"/>
<rect x="1611" y="429" width="5" height="12" fill="#ff0000"/>
<rect x="1612" y="430" width="3" height="10" fill="#b00808"/>
<rect x="1629" y="434" width="1" height="43" fill="#ff0000"/>
<rect x="1627" y="439" width="5" height="30" fill="#ff0000"/>
<rect x="1628" y="440" width="3" height="28" fill="#b00808"/>
<rect x="1637" y="456" width="1" height="25" fill="#ff0000"/>
<rect x="1635" y="468" width="5" height="5" fill="#ff0000"/>
<rect x="1636" y="469" width="3" height="3" fill="#b00808"/>
<rect x="1645" y="467" width="1" height="18" fill="#ff0000"/>
<rect x="1643" y="471" width="5" height="2" fill="#ff0000"/>
<rect x="1653" y="455" width="1" height="18" fill="#7b68ee"/>
<rect x="1651" y="466" width="5" height="7" fill="#7b68ee"/>
<rect x="1652" y="467" width="3" height="5" fill="#0000f0"/>
<rect x="1661" y="429" width="1" height="44" fill="#7b68ee"/>
<rect x="1659" y="435" width="5" height="32" fill="#7b68ee"/>
<rect x="1660" y="436" width="3" height="30" fill="#0000f0"/>
<rect x="1669" y="424" width="1" height="25" fill="#ff0000"/>
<rect x="1667" y="435" width="5" height="4" fill="#ff0000"/>
<rect x="1668" y="436" width="3" height="2" fill="#b00808"/>
<rect x="1677" y="424" width="1" height="18" fill="#7b68ee"/>
<rect x="1675" y="434" width="5" height="5" fill="#7b68ee"/>
<rect x="1676" y="435" width="3" height="3" fill="#0000f0"/>
<rect x="1685" y="422" width="1" height="16" fill="#7b68ee"/>
<rect x="1683" y="432" width="5" height="3" fill="#7b68ee"/>
<rect x="1684" y="433" width="3" height="1" fill="#0000f0"/>
<rect x="1693" y="414" width="1" height="19" fill="#7b68ee"/>
<rect x="1691" y="419" width="5" height="14" fill="#7b68ee"/>
<rect x="1692" y="420" width="3" height="12" fill="#0000f0"/>
<rect x="1701" y="411" width="1" height="18" fill="#ff0000"/>
<rect x="1699" y="419" width="5" height="4" fill="#ff0000"/>
<rect x="1700" y="420" width="3" height="2" fill="#b00808"/>
<rect x="1709" y="408" width="1" height="21" fill="#7b68ee"/>
<rect x="1707" y="418" width="5" height="5" fill="#7b68ee"/>
<rect x="1708" y="419" width="3" height="3" fill="#0000f0"/>
<rect x="1717" y="408" width="1" height="19" fill="#ff0000"/>
<rect x="1715" y="419" width="5" height="4" fill="#ff0000"/>
<rect x="1716" y="420" width="3" height="2" fill="#b00808"/>
<rect x="1725" y="410" width="1" height="21" fill="#ff0000"/>
<rect x="1723" y="421" width="5" height="6" fill="#ff0000"/>
<rect x="1724" y="422" width="3" height="4" fill="#b00808"/>
<rect x="1733" y="409" width="1" height="21" fill="#7b68ee"/>
<rect x="1731" y="423" width="5" height="4" fill="#7b68ee"/>
<rect x="1732" y="424" width="3" height="2" fill="#0000f0"/>
<rect x="1741" y="396" width="1" height="29" fill="#7b68ee"/>
<rect x="1739" y="409" width="5" height="13" fill="#7b68ee"/>
<rect x="1740" y="410" width="3" height="11" fill="#0000f0"/>
<rect x="1749" y="400" width="1" height="19" fill="#7b68ee"/>
<rect x="1747" y="407" width="5" height="4" fill="#7b68ee"/>
<rect x="1748" y="408" width="3" height="2" fill="#0000f0"/>
<rect x="1757" y="393" width="1" height="18" fill="#7b68ee"/>
<rect x="1755" y="402" width="5" height="7" fill="#7b68ee"/>
<rect x="1756" y="403" width="3" height="5" fill="#0000f0"/>
<rect x="1765" y="394" width="1" height="17" fill="#ff0000"/>
<rect x="1763" y="402" width="5" height="9" fill="#ff0000"/>
<rect x="1764" y="403" width="3" height="7" fill="#b00808"/>
<rect x="1773" y="408" width="1" height="13" fill="#ff0000"/>
<rect x="1771" y="409" width="5" height="11" fill="#ff0000"/>
<rect x="1772" y="410" width="3" height="9" fill="#b00808"/>
<rect x="1781" y="402" width="1" height="21" fill="#7b68ee"/>
<rect x="1779" y="412" width="5" height="6" fill="#7b68ee"/>
<rect x="1780" y="413" width="3" height="4" fill="#0000f0"/>
<rect x="1789" y="408" width="1" height="14" fill="#ff0000"/>
<rect x="1787" y="412" width="5" height="3" fill="#ff0000"/>
<rect x="1788" y="413" width="3" height="1" fill="#b00808"/>
<rect x="1797" y="399" width="1" height="36" fill="#ff0000"/>
<rect x="1795" y="416" width="5" height="7" fill="#ff0000"/>
<rect x="1796" y="417" width="3" height="5" fill="#b00808"/>
<rect x="1805" y="397" width="1" height="31" fill="#7b68ee"/>
<rect x="1803" y="418" width="5" height="5" fill="#7b68ee"/>
<rect x="1804" y="419" width="3" height="3" fill="#0000f0"/>
<rect x="1813" y="401" width="1" height="19" fill="#7b68ee"/>
<rect x="1811" y="414" width="5" height="6" fill="#7b68ee"/>
<rect x="1812" y="415" width="3" height="4" fill="#0000f0"/>
<rect x="1821" y="380" width="1" height="35" fill="#7b68ee"/>
<rect x="1819" y="383" width="5" height="31" fill="#7b68ee"/>
<rect x="1820" y="384" width="3" height="29" fill="#0000f0"/>
<rect x="1829" y="353" width="1" height="67" fill="#7b68ee"/>
<rect x="1827" y="371" width="5" height="13" fill="#7b68ee"/>
<rect x="1828" y="372" width="3" height="11" fill="#0000f0"/>
<rect x="1837" y="349" width="1" height="57" fill="#ff0000"/>
<rect x="1835" y="371" width="5" height="26" fill="#ff0000"/>
<rect x="1836" y="372" width="3" height="24" fill="#b00808"/>
<rect x="1845" y="376" width="1" height="27" fill="#ff0000"/>
<rect x="1843" y="398" width="5" height="4" fill="#ff0000"/>
<rect x="1844" y="399" width="3" height="2" fill="#b00808"/>
<rect x="1853" y="398" width="1" height="20" fill="#ff0000"/>
<rect x="1851" y="398" width="5" height="19" fill="#ff0000"/>
<rect x="1852" y="399" width="3" height="17" fill="#b00808"/>
</g>
<g clip-path="url(#cm)" shape-rendering="crispEdges">
<polyline points="5.5,64.0 65.5,64.2 98.0,65.5 146.8,67.4 194.2,70.5 240.5,73.2 274.2,76.5 315.5,80.2 353.0,83.4 403.0,86.5 428.0,88.0 465.5,89.0 480.5,89.0 493.0,89.0 568.0,89.0 570.5,88.0 609.2,88.0 610.5,87.0 705.5,86.8 706.8,85.8 720.5,85.8 761.8,84.5 778.0,83.0 864.2,83.0 866.8,82.0 920.5,82.0 923.0,81.0 954.2,81.0 955.5,82.0 960.5,82.0 979.2,82.0 995.5,84.0 1018.0,86.1 1043.0,86.1 1066.8,87.4 1090.5,88.6 1114.2,89.5 1130.5,91.1 1148.0,92.0 1171.8,93.2 1186.8,94.2 1200.5,94.2 1210.5,94.9 1258.0,95.2 1281.8,97.4 1313.0,101.1 1350.5,105.2 1388.0,112.4 1475.5,136.0 1500.5,144.2 1530.5,155.5 1575.5,171.0 1600.5,180.0 1645.5,195.0 1688.0,207.5 1725.5,216.8 1763.0,225.5 1813.0,237.5 1853.5,245.0" fill="none" stroke="#ffffff" stroke-width="1" />
<polyline points="5.5,79.9 17.4,79.5 41.8,78.0 50.5,76.8 58.0,77.0 75.5,78.6 106.8,80.2 138.0,83.6 181.8,90.5 213.0,93.6 240.5,98.2 265.5,104.0 296.8,109.2 321.8,114.6 346.8,120.9 365.5,121.5 390.5,122.1 413.0,124.0 440.5,123.8 453.0,121.5 465.5,120.2 480.5,118.8 496.8,117.8 521.8,115.5 553.0,109.5 585.5,103.6 618.0,98.2 655.5,95.5 686.8,94.0 699.2,91.8 720.5,89.0 733.0,88.2 758.0,83.2 778.0,79.2 808.0,78.2 833.0,78.2 858.0,78.2 868.0,76.0 874.2,75.1 908.0,75.1 945.5,75.1 951.8,76.0 960.5,77.0 979.2,80.5 998.0,86.1 1023.0,92.8 1048.0,95.8 1073.0,98.0 1098.0,100.5 1123.0,104.9 1148.0,109.2 1173.0,112.4 1198.0,114.2 1200.5,114.4 1238.0,113.9 1254.2,113.2 1260.5,113.8 1275.5,117.4 1300.5,124.9 1325.5,131.8 1350.5,140.5 1386.5,160.5 1400.5,167.5 1415.5,176.5 1435.5,187.5 1458.0,208.0 1483.0,233.0 1493.0,240.5 1510.5,258.0 1525.5,271.5 1535.5,278.5 1560.5,299.2 1585.5,315.5 1600.5,323.5 1620.5,334.5 1645.5,349.5 1660.5,358.0 1680.5,364.5 1700.5,370.0 1720.5,375.0 1746.5,380.5 1778.0,384.5 1803.0,388.5 1828.0,389.5 1853.5,391.0" fill="none" stroke="#00ffff" stroke-width="1" />
<polyline points="5.5,71.8 13.5,73.2 21.5,73.6 29.5,73.6 37.5,71.5 45.5,69.9 53.5,69.0 61.5,71.1 69.5,74.5 77.5,77.8 85.5,78.0 93.5,79.5 101.5,82.4 109.5,84.2 117.5,86.1 125.5,88.4 133.5,90.5 141.5,93.0 149.5,95.5 157.5,97.4 165.5,100.5 173.5,104.2 181.5,108.0 189.5,106.8 197.5,106.8 205.5,108.0 213.5,111.1 221.5,115.5 229.5,119.0 237.5,119.0 245.5,120.2 253.5,124.0 261.5,126.5 269.5,132.8 277.5,137.1 285.5,135.9 293.5,135.0 301.5,134.6 309.5,136.5 317.5,139.6 325.5,142.8 333.5,145.9 341.5,150.0 349.5,150.0 357.5,145.0 365.5,143.4 373.5,140.9 381.5,138.8 389.5,136.8 397.5,136.5 405.5,137.5 413.5,136.2 421.5,135.0 429.5,133.8 437.5,132.5 445.5,128.0 453.5,122.8 461.5,118.4 469.5,115.5 477.5,113.0 485.5,112.4 493.5,110.8 501.5,109.2 509.5,107.8 517.5,106.1 525.5,104.9 533.5,101.8 541.5,96.1 549.5,93.0 557.5,91.1 565.5,89.2 573.5,85.5 581.5,81.8 589.5,79.5 597.5,78.0 605.5,77.0 613.5,77.0 621.5,75.5 629.5,76.5 637.5,78.6 645.5,79.2 653.5,77.4 661.5,78.6 669.5,79.0 677.5,77.4 685.5,81.1 693.5,81.1 701.5,79.0 709.5,77.4 717.5,75.8 725.5,75.1 733.5,73.2 741.5,69.5 749.5,65.8 757.5,62.0 765.5,58.9 773.5,56.4 781.5,54.9 789.5,57.6 797.5,60.1 805.5,62.2 813.5,64.5 821.5,65.8 829.5,67.0 837.5,70.8 845.5,72.0 853.5,73.0 861.5,69.5 869.5,66.0 877.5,63.9 885.5,63.9 893.5,64.5 901.5,66.4 909.5,66.8 917.5,69.5 925.5,69.8 933.5,70.8 941.5,70.8 949.5,73.9 957.5,78.9 965.5,84.9 973.5,89.9 981.5,94.2 989.5,100.2 997.5,107.4 1005.5,113.6 1013.5,117.4 1021.5,120.2 1029.5,118.0 1037.5,118.2 1045.5,118.0 1053.5,118.0 1061.5,118.2 1069.5,119.2 1077.5,119.0 1085.5,118.6 1093.5,118.0 1101.5,118.0 1109.5,118.6 1117.5,123.0 1125.5,126.1 1133.5,129.0 1141.5,131.1 1149.5,132.0 1157.5,131.1 1165.5,131.1 1173.5,131.8 1181.5,131.8 1189.5,132.0 1197.5,131.5 1205.5,129.0 1213.5,128.6 1221.5,128.0 1229.5,124.2 1237.5,121.1 1245.5,118.6 1253.5,115.8 1261.5,123.6 1269.5,130.5 1277.5,134.9 1285.5,139.2 1293.5,143.0 1301.5,150.5 1309.5,155.5 1317.5,156.8 1325.5,161.1 1333.5,166.8 1341.5,176.1 1349.5,183.0 1357.5,192.8 1365.5,202.4 1373.5,208.6 1381.5,214.9 1389.5,223.6 1397.5,231.8 1405.5,237.4 1413.5,243.0 1421.5,249.2 1429.5,256.1 1437.5,261.8 1445.5,276.1 1453.5,293.0 1461.5,311.1 1469.5,328.0 1477.5,336.8 1485.5,348.6 1493.5,359.9 1501.5,370.5 1509.5,382.1 1517.5,390.2 1525.5,396.5 1533.5,402.1 1541.5,407.1 1549.5,413.4 1557.5,417.1 1565.5,420.2 1573.5,422.8 1581.5,425.2 1589.5,427.5 1597.5,429.6 1605.5,430.2 1613.5,430.2 1621.5,432.1 1629.5,437.8 1637.5,442.8 1645.5,446.8 1653.5,449.9 1661.5,448.0 1669.5,447.4 1677.5,444.2 1685.5,441.8 1693.5,439.0 1701.5,436.5 1709.5,434.2 1717.5,432.8 1725.5,431.5 1733.5,430.5 1741.5,428.0 1749.5,424.9 1757.5,422.4 1765.5,419.9 1773.5,419.9 1781.5,418.6 1789.5,417.8 1797.5,418.0 1805.5,418.6 1813.5,416.8 1821.5,412.8 1829.5,407.0 1837.5,405.5 1845.5,404.9 1853.5,406.1" fill="none" stroke="#ff0000" stroke-width="1" />
<polyline points="5.5,74.9 13.5,74.2 21.5,74.0 29.5,74.0 37.5,70.9 45.5,68.6 53.5,64.2 61.5,71.8 69.5,78.0 77.5,87.4 85.5,83.6 93.5,86.8 101.5,89.9 109.5,91.1 117.5,92.8 125.5,94.9 133.5,98.0 141.5,102.4 149.5,106.1 157.5,108.6 165.5,113.6 173.5,119.0 181.5,119.0 189.5,112.4 197.5,110.8 205.5,112.0 213.5,118.0 221.5,128.0 229.5,129.9 237.5,126.1 245.5,129.6 253.5,134.2 261.5,137.8 269.5,150.2 277.5,152.1 285.5,144.6 293.5,139.0 301.5,136.8 309.5,140.2 317.5,145.9 325.5,151.5 333.5,156.5 341.5,162.8 349.5,156.5 357.5,146.5 365.5,141.5 373.5,135.2 381.5,131.5 389.5,130.5 397.5,132.8 405.5,133.8 413.5,135.0 421.5,131.5 429.5,129.0 437.5,128.8 445.5,117.8 453.5,109.6 461.5,104.6 469.5,101.9 477.5,102.8 485.5,102.4 493.5,103.0 501.5,101.8 509.5,99.9 517.5,99.0 525.5,97.8 533.5,94.2 541.5,83.0 549.5,80.8 557.5,81.8 565.5,80.2 573.5,74.9 581.5,69.0 589.5,67.8 597.5,67.8 605.5,69.5 613.5,71.1 621.5,69.9 629.5,75.5 637.5,78.6 645.5,81.1 653.5,77.0 661.5,79.0 669.5,81.1 677.5,76.1 685.5,84.0 693.5,84.0 701.5,78.0 709.5,74.2 717.5,71.1 725.5,70.8 733.5,70.8 741.5,65.1 749.5,55.8 757.5,48.9 765.5,45.8 773.5,45.8 781.5,45.1 789.5,55.8 797.5,61.4 805.5,65.5 813.5,68.9 821.5,68.9 829.5,73.9 837.5,79.5 845.5,78.9 853.5,78.9 861.5,69.5 869.5,61.4 877.5,56.8 885.5,58.5 893.5,63.2 901.5,67.6 909.5,68.9 917.5,73.2 925.5,73.9 933.5,73.5 941.5,73.9 949.5,80.8 957.5,90.8 965.5,99.5 973.5,107.0 981.5,112.4 989.5,118.6 997.5,129.0 1005.5,135.5 1013.5,139.2 1021.5,135.5 1029.5,127.4 1037.5,124.2 1045.5,121.8 1053.5,118.6 1061.5,119.0 1069.5,121.8 1077.5,124.0 1085.5,120.5 1093.5,118.2 1101.5,117.8 1109.5,120.2 1117.5,129.2 1125.5,135.5 1133.5,139.0 1141.5,139.9 1149.5,138.0 1157.5,134.2 1165.5,132.0 1173.5,132.0 1181.5,132.0 1189.5,132.0 1197.5,128.6 1205.5,127.0 1213.5,128.0 1221.5,127.4 1229.5,122.4 1237.5,113.0 1245.5,109.0 1253.5,106.8 1261.5,124.9 1269.5,141.8 1277.5,148.6 1285.5,155.2 1293.5,160.5 1301.5,169.9 1309.5,176.1 1317.5,172.0 1325.5,173.6 1333.5,185.5 1341.5,200.2 1349.5,206.8 1357.5,219.2 1365.5,233.0 1373.5,240.2 1381.5,243.6 1389.5,254.2 1397.5,263.6 1405.5,264.9 1413.5,270.5 1421.5,276.1 1429.5,281.8 1437.5,285.2 1445.5,315.5 1453.5,345.5 1461.5,370.5 1469.5,384.6 1477.5,389.0 1485.5,399.6 1493.5,407.8 1501.5,417.1 1509.5,426.5 1517.5,432.8 1525.5,434.2 1533.5,432.8 1541.5,434.6 1549.5,440.9 1557.5,441.8 1565.5,441.5 1573.5,440.0 1581.5,438.8 1589.5,440.9 1597.5,440.0 1605.5,437.1 1613.5,438.0 1621.5,438.8 1629.5,448.4 1637.5,456.5 1645.5,461.8 1653.5,463.6 1661.5,453.6 1669.5,448.6 1677.5,444.2 1685.5,441.1 1693.5,433.6 1701.5,429.2 1709.5,425.5 1717.5,424.9 1725.5,424.9 1733.5,423.6 1741.5,419.2 1749.5,414.5 1757.5,411.1 1765.5,410.5 1773.5,414.0 1781.5,413.2 1789.5,414.0 1797.5,415.8 1805.5,416.8 1813.5,415.2 1821.5,401.1 1829.5,393.6 1837.5,395.2 1845.5,396.8 1853.5,401.1" fill="none" stroke="#ffff00" stroke-width="1" />
<polyline points="485.0,63.9 933.8,8.0" fill="none" stroke="#ffff00" stroke-width="2" />
<polyline points="973.0,122.2 1431.0,288.9" fill="none" stroke="#ff0000" stroke-width="1" stroke-dasharray="3 3"/>
<polyline points="1753.0,5.5 1853.5,17.5" fill="none" stroke="#0000ff" stroke-width="1" />
<rect x="969" y="134" width="9" height="1" fill="#ff0000"/>
<rect x="969" y="447" width="8" height="1" fill="#0000ff"/>
</g>
<rect x="965" y="5" width="1" height="868" fill="#f6f6f6" shape-rendering="crispEdges"/>
<path d="M966.5 119.5 H970 V116.5 L977 122 L970 127.5 V124.5 H966.5 Z" fill="#ffffff"/>
<path d="M967.5 120.6 H971 V118.6 L975.4 122 L971 125.4 V123.4 H967.5 Z" fill="#ff0000"/>
<path d="M1427 288.8 L1435 283.5 V294 Z" fill="#ffffff"/>
<path d="M1429 288.8 L1433.6 285.8 V291.8 Z" fill="#daa520"/>
<g clip-path="url(#c1)" shape-rendering="crispEdges">
<polyline points="5.5,572.1 13.5,567.2 21.5,555.2 29.5,547.3 37.5,538.1 45.5,532.3 53.5,523.8 61.5,530.6 69.5,547.3 77.5,570.4 85.5,574.8 93.5,567.7 101.5,555.8 109.5,554.0 117.5,555.5 125.5,556.8 133.5,555.6 141.5,555.4 149.5,561.3 157.5,568.4 165.5,575.6 173.5,579.6 181.5,582.1 189.5,574.5 197.5,559.9 205.5,544.9 213.5,545.1 221.5,559.2 229.5,576.2 237.5,584.2 245.5,580.8 253.5,577.1 261.5,578.1 269.5,584.7 277.5,587.1 285.5,582.4 293.5,567.7 301.5,552.1 309.5,543.5 317.5,545.8 325.5,556.5 333.5,569.1 341.5,582.7 349.5,588.0 357.5,581.3 365.5,561.7 373.5,540.0 381.5,526.5 389.5,521.1 397.5,524.7 405.5,530.9 413.5,541.0 421.5,548.4 429.5,554.2 437.5,554.7 445.5,549.1 453.5,539.6 461.5,529.4 469.5,526.4 477.5,529.0 485.5,535.8 493.5,543.8 501.5,548.0 509.5,551.6 517.5,549.6 525.5,550.2 533.5,541.9 541.5,532.9 549.5,521.5 557.5,522.9 565.5,530.8 573.5,540.0 581.5,538.8 589.5,534.7 597.5,531.8 605.5,539.6 613.5,551.3 621.5,561.7 629.5,571.0 637.5,576.5 645.5,584.5 653.5,581.8 661.5,578.6 669.5,571.3 677.5,566.2 685.5,560.6 693.5,553.4 701.5,550.2 709.5,542.4 717.5,533.5 725.5,525.3 733.5,521.5 741.5,520.6 749.5,517.0 757.5,512.1 765.5,509.2 773.5,511.3 781.5,518.2 789.5,531.2 797.5,544.7 805.5,558.2 813.5,563.9 821.5,565.7 829.5,565.3 837.5,567.6 845.5,570.1 853.5,568.8 861.5,555.3 869.5,538.4 877.5,521.5 885.5,516.1 893.5,520.4 901.5,533.9 909.5,549.7 917.5,565.0 925.5,574.2 933.5,579.6 941.5,576.3 949.5,575.9 957.5,577.4 965.5,587.5 973.5,593.8 981.5,600.3 989.5,600.8 997.5,602.9 1005.5,601.9 1013.5,601.0 1021.5,593.3 1029.5,575.9 1037.5,553.6 1045.5,534.4 1053.5,527.1 1061.5,525.8 1069.5,528.4 1077.5,534.7 1085.5,542.1 1093.5,548.8 1101.5,549.1 1109.5,552.7 1117.5,562.7 1125.5,577.8 1133.5,591.2 1141.5,596.3 1149.5,595.0 1157.5,584.7 1165.5,570.1 1173.5,552.4 1181.5,540.3 1189.5,531.8 1197.5,527.7 1205.5,520.8 1213.5,516.6 1221.5,514.5 1229.5,516.2 1237.5,516.1 1245.5,516.5 1253.5,518.7 1261.5,529.6 1269.5,544.3 1277.5,558.8 1285.5,566.3 1293.5,568.9 1301.5,571.8 1309.5,575.7 1317.5,578.6 1325.5,577.1 1333.5,571.7 1341.5,572.2 1349.5,576.1 1357.5,586.5 1365.5,593.1 1373.5,599.7 1381.5,600.7 1389.5,600.8 1397.5,600.6 1405.5,600.9 1413.5,600.6 1421.5,598.5 1429.5,599.2 1437.5,597.3 1445.5,594.9 1453.5,591.6 1461.5,593.4 1469.5,598.2 1477.5,600.2 1485.5,599.2 1493.5,596.3 1501.5,597.1 1509.5,598.8 1517.5,600.9 1525.5,598.6 1533.5,592.3 1541.5,584.1 1549.5,580.3 1557.5,579.9 1565.5,578.6 1573.5,568.8 1581.5,557.1 1589.5,550.8 1597.5,549.5 1605.5,547.1 1613.5,540.5 1621.5,539.9 1629.5,551.7 1637.5,569.8 1645.5,584.7 1653.5,588.5 1661.5,580.0 1669.5,563.6 1677.5,542.2 1685.5,528.0 1693.5,518.3 1701.5,515.5 1709.5,513.2 1717.5,514.8 1725.5,519.1 1733.5,526.9 1741.5,535.4 1749.5,539.7 1757.5,538.4 1765.5,535.9 1773.5,539.8 1781.5,549.0 1789.5,558.6 1797.5,563.5 1805.5,566.3 1813.5,566.3 1821.5,557.4 1829.5,542.9 1837.5,532.0 1845.5,535.9 1853.5,550.9" fill="none" stroke="#ff0000" stroke-width="1" stroke-dasharray="4 3"/>
<polyline points="5.5,565.6 13.5,556.9 21.5,543.1 29.5,541.9 37.5,529.4 45.5,525.6 53.5,516.2 61.5,550.0 69.5,575.6 77.5,585.6 85.5,563.1 93.5,554.4 101.5,550.0 109.5,557.8 117.5,558.8 125.5,554.0 133.5,554.0 141.5,558.1 149.5,571.9 157.5,575.2 165.5,579.8 173.5,583.8 181.5,582.8 189.5,556.9 197.5,540.0 205.5,537.8 213.5,557.5 221.5,582.5 229.5,588.8 237.5,581.2 245.5,572.5 253.5,577.5 261.5,584.3 269.5,592.2 277.5,584.7 285.5,570.3 293.5,548.1 301.5,538.0 309.5,544.4 317.5,555.1 325.5,570.1 333.5,582.1 341.5,595.9 349.5,585.9 357.5,562.0 365.5,537.2 373.5,520.9 381.5,521.3 389.5,521.1 397.5,531.7 405.5,539.8 413.5,551.6 421.5,553.8 429.5,557.3 437.5,553.0 445.5,537.1 453.5,528.6 461.5,522.4 469.5,528.2 477.5,536.5 485.5,542.6 493.5,552.2 501.5,549.1 509.5,553.3 517.5,546.2 525.5,551.0 533.5,528.4 541.5,519.2 549.5,516.8 557.5,532.5 565.5,542.9 573.5,544.5 581.5,529.0 589.5,530.7 597.5,535.7 605.5,552.4 613.5,565.7 621.5,567.1 629.5,580.1 637.5,582.4 645.5,590.9 653.5,572.1 661.5,572.7 669.5,569.2 677.5,556.8 685.5,555.7 693.5,547.8 701.5,547.3 709.5,532.1 717.5,521.2 725.5,522.7 733.5,520.7 741.5,518.5 749.5,511.8 757.5,505.9 765.5,509.9 773.5,518.0 781.5,526.7 789.5,549.0 797.5,558.3 805.5,567.2 813.5,566.2 821.5,563.6 829.5,566.0 837.5,573.0 845.5,571.2 853.5,562.2 861.5,532.5 869.5,520.4 877.5,511.7 885.5,516.2 893.5,533.1 901.5,552.2 909.5,563.9 917.5,578.8 925.5,579.9 933.5,580.1 941.5,569.0 949.5,578.5 957.5,584.7 965.5,599.1 973.5,597.6 981.5,604.3 989.5,600.5 997.5,603.9 1005.5,601.3 1013.5,597.8 1021.5,580.8 1029.5,549.2 1037.5,530.8 1045.5,523.3 1053.5,527.1 1061.5,527.1 1069.5,531.2 1077.5,546.0 1085.5,549.0 1093.5,551.3 1101.5,546.9 1109.5,560.0 1117.5,581.0 1125.5,592.3 1133.5,600.2 1141.5,596.6 1149.5,588.3 1157.5,569.3 1165.5,552.9 1173.5,535.1 1181.5,532.8 1189.5,527.6 1197.5,522.7 1205.5,512.1 1213.5,514.9 1221.5,516.4 1229.5,517.4 1237.5,514.4 1245.5,517.6 1253.5,524.1 1261.5,547.1 1269.5,561.7 1277.5,567.6 1285.5,569.8 1293.5,569.4 1301.5,576.3 1309.5,581.6 1317.5,578.0 1325.5,571.8 1333.5,565.3 1341.5,579.6 1349.5,583.5 1357.5,596.3 1365.5,599.5 1373.5,603.2 1381.5,599.4 1389.5,599.9 1397.5,602.6 1405.5,600.2 1413.5,599.1 1421.5,596.2 1429.5,602.2 1437.5,593.3 1445.5,589.1 1453.5,592.3 1461.5,598.9 1469.5,603.4 1477.5,598.3 1485.5,595.9 1493.5,594.8 1501.5,600.5 1509.5,601.1 1517.5,601.0 1525.5,593.6 1533.5,582.4 1541.5,576.4 1549.5,581.9 1557.5,581.4 1565.5,572.4 1573.5,552.5 1581.5,546.5 1589.5,553.4 1597.5,548.5 1605.5,539.3 1613.5,533.7 1621.5,546.7 1629.5,574.7 1637.5,588.1 1645.5,591.3 1653.5,586.0 1661.5,562.6 1669.5,542.3 1677.5,521.9 1685.5,519.9 1693.5,513.3 1701.5,513.2 1709.5,513.1 1717.5,518.1 1725.5,526.3 1733.5,536.3 1741.5,543.8 1749.5,539.1 1757.5,532.3 1765.5,536.4 1773.5,550.6 1781.5,560.0 1789.5,565.3 1797.5,565.2 1805.5,568.5 1813.5,565.3 1821.5,538.3 1829.5,525.1 1837.5,532.6 1845.5,550.0 1853.5,570.0" fill="none" stroke="#20b2aa" stroke-width="1" />
</g>
<g clip-path="url(#c2)" shape-rendering="crispEdges" fill="#1e90ff">
<rect x="3" y="663" width="5" height="2"/>
<rect x="11" y="662" width="5" height="1"/>
<rect x="19" y="658" width="5" height="5"/>
<rect x="27" y="657" width="5" height="6"/>
<rect x="35" y="653" width="5" height="10"/>
<rect x="43" y="652" width="5" height="11"/>
<rect x="51" y="648" width="5" height="15"/>
<rect x="59" y="659" width="5" height="4"/>
<rect x="67" y="663" width="5" height="6"/>
<rect x="75" y="663" width="5" height="17"/>
<rect x="83" y="663" width="5" height="11"/>
<rect x="91" y="663" width="5" height="14"/>
<rect x="99" y="663" width="5" height="14"/>
<rect x="107" y="663" width="5" height="12"/>
<rect x="115" y="663" width="5" height="11"/>
<rect x="123" y="663" width="5" height="8"/>
<rect x="131" y="663" width="5" height="8"/>
<rect x="139" y="663" width="5" height="10"/>
<rect x="147" y="663" width="5" height="11"/>
<rect x="155" y="663" width="5" height="9"/>
<rect x="163" y="663" width="5" height="12"/>
<rect x="171" y="663" width="5" height="13"/>
<rect x="179" y="663" width="5" height="9"/>
<rect x="187" y="658" width="5" height="5"/>
<rect x="195" y="653" width="5" height="10"/>
<rect x="203" y="653" width="5" height="10"/>
<rect x="211" y="658" width="5" height="5"/>
<rect x="219" y="663" width="5" height="6"/>
<rect x="227" y="663" width="5" height="6"/>
<rect x="235" y="662" width="5" height="1"/>
<rect x="243" y="662" width="5" height="1"/>
<rect x="251" y="663" width="5" height="7"/>
<rect x="259" y="663" width="5" height="5"/>
<rect x="267" y="663" width="5" height="16"/>
<rect x="275" y="663" width="5" height="13"/>
<rect x="283" y="661" width="5" height="2"/>
<rect x="291" y="652" width="5" height="11"/>
<rect x="299" y="648" width="5" height="15"/>
<rect x="307" y="651" width="5" height="12"/>
<rect x="315" y="654" width="5" height="9"/>
<rect x="323" y="662" width="5" height="1"/>
<rect x="331" y="663" width="5" height="3"/>
<rect x="339" y="663" width="5" height="10"/>
<rect x="347" y="663" width="5" height="1"/>
<rect x="355" y="649" width="5" height="14"/>
<rect x="363" y="644" width="5" height="19"/>
<rect x="371" y="636" width="5" height="27"/>
<rect x="379" y="632" width="5" height="31"/>
<rect x="387" y="634" width="5" height="29"/>
<rect x="395" y="640" width="5" height="23"/>
<rect x="403" y="648" width="5" height="15"/>
<rect x="411" y="654" width="5" height="9"/>
<rect x="419" y="654" width="5" height="9"/>
<rect x="427" y="655" width="5" height="8"/>
<rect x="435" y="659" width="5" height="4"/>
<rect x="443" y="648" width="5" height="15"/>
<rect x="451" y="641" width="5" height="22"/>
<rect x="459" y="640" width="5" height="23"/>
<rect x="467" y="641" width="5" height="22"/>
<rect x="475" y="648" width="5" height="15"/>
<rect x="483" y="654" width="5" height="9"/>
<rect x="491" y="661" width="5" height="2"/>
<rect x="499" y="663" width="5" height="1"/>
<rect x="507" y="663" width="5" height="4"/>
<rect x="515" y="663" width="5" height="4"/>
<rect x="523" y="663" width="5" height="5"/>
<rect x="531" y="662" width="5" height="1"/>
<rect x="539" y="653" width="5" height="10"/>
<rect x="547" y="653" width="5" height="10"/>
<rect x="555" y="658" width="5" height="5"/>
<rect x="563" y="659" width="5" height="4"/>
<rect x="571" y="658" width="5" height="5"/>
<rect x="579" y="653" width="5" height="10"/>
<rect x="587" y="658" width="5" height="5"/>
<rect x="595" y="662" width="5" height="1"/>
<rect x="603" y="663" width="5" height="4"/>
<rect x="611" y="663" width="5" height="10"/>
<rect x="619" y="663" width="5" height="10"/>
<rect x="627" y="663" width="5" height="18"/>
<rect x="635" y="663" width="5" height="22"/>
<rect x="643" y="663" width="5" height="23"/>
<rect x="651" y="663" width="5" height="14"/>
<rect x="659" y="663" width="5" height="16"/>
<rect x="667" y="663" width="5" height="14"/>
<rect x="675" y="663" width="5" height="6"/>
<rect x="683" y="663" width="5" height="14"/>
<rect x="691" y="663" width="5" height="10"/>
<rect x="699" y="663" width="5" height="1"/>
<rect x="707" y="660" width="5" height="3"/>
<rect x="715" y="656" width="5" height="7"/>
<rect x="723" y="657" width="5" height="6"/>
<rect x="731" y="658" width="5" height="5"/>
<rect x="739" y="652" width="5" height="11"/>
<rect x="747" y="645" width="5" height="18"/>
<rect x="755" y="640" width="5" height="23"/>
<rect x="763" y="642" width="5" height="21"/>
<rect x="771" y="648" width="5" height="15"/>
<rect x="779" y="652" width="5" height="11"/>
<rect x="787" y="663" width="5" height="7"/>
<rect x="795" y="663" width="5" height="17"/>
<rect x="803" y="663" width="5" height="24"/>
<rect x="811" y="663" width="5" height="27"/>
<rect x="819" y="663" width="5" height="25"/>
<rect x="827" y="663" width="5" height="26"/>
<rect x="835" y="663" width="5" height="28"/>
<rect x="843" y="663" width="5" height="20"/>
<rect x="851" y="663" width="5" height="14"/>
<rect x="859" y="662" width="5" height="1"/>
<rect x="867" y="649" width="5" height="14"/>
<rect x="875" y="643" width="5" height="20"/>
<rect x="883" y="646" width="5" height="17"/>
<rect x="891" y="654" width="5" height="9"/>
<rect x="899" y="661" width="5" height="2"/>
<rect x="907" y="663" width="5" height="2"/>
<rect x="915" y="663" width="5" height="9"/>
<rect x="923" y="663" width="5" height="11"/>
<rect x="931" y="663" width="5" height="9"/>
<rect x="939" y="663" width="5" height="8"/>
<rect x="947" y="663" width="5" height="13"/>
<rect x="955" y="663" width="5" height="19"/>
<rect x="963" y="663" width="5" height="28"/>
<rect x="971" y="663" width="5" height="30"/>
<rect x="979" y="663" width="5" height="30"/>
<rect x="987" y="663" width="5" height="30"/>
<rect x="995" y="663" width="5" height="33"/>
<rect x="1003" y="663" width="5" height="31"/>
<rect x="1011" y="663" width="5" height="24"/>
<rect x="1019" y="663" width="5" height="10"/>
<rect x="1027" y="652" width="5" height="11"/>
<rect x="1035" y="644" width="5" height="19"/>
<rect x="1043" y="638" width="5" height="25"/>
<rect x="1051" y="633" width="5" height="30"/>
<rect x="1059" y="634" width="5" height="29"/>
<rect x="1067" y="637" width="5" height="26"/>
<rect x="1075" y="645" width="5" height="18"/>
<rect x="1083" y="645" width="5" height="18"/>
<rect x="1091" y="647" width="5" height="16"/>
<rect x="1099" y="650" width="5" height="13"/>
<rect x="1107" y="655" width="5" height="8"/>
<rect x="1115" y="663" width="5" height="3"/>
<rect x="1123" y="663" width="5" height="10"/>
<rect x="1131" y="663" width="5" height="14"/>
<rect x="1139" y="663" width="5" height="12"/>
<rect x="1147" y="663" width="5" height="7"/>
<rect x="1155" y="662" width="5" height="1"/>
<rect x="1163" y="657" width="5" height="6"/>
<rect x="1171" y="654" width="5" height="9"/>
<rect x="1179" y="652" width="5" height="11"/>
<rect x="1187" y="651" width="5" height="12"/>
<rect x="1195" y="650" width="5" height="13"/>
<rect x="1203" y="649" width="5" height="14"/>
<rect x="1211" y="653" width="5" height="10"/>
<rect x="1219" y="654" width="5" height="9"/>
<rect x="1227" y="651" width="5" height="12"/>
<rect x="1235" y="643" width="5" height="20"/>
<rect x="1243" y="641" width="5" height="22"/>
<rect x="1251" y="642" width="5" height="21"/>
<rect x="1259" y="663" width="5" height="5"/>
<rect x="1267" y="663" width="5" height="25"/>
<rect x="1275" y="663" width="5" height="33"/>
<rect x="1283" y="663" width="5" height="38"/>
<rect x="1291" y="663" width="5" height="39"/>
<rect x="1299" y="663" width="5" height="43"/>
<rect x="1307" y="663" width="5" height="41"/>
<rect x="1315" y="663" width="5" height="23"/>
<rect x="1323" y="663" width="5" height="14"/>
<rect x="1331" y="663" width="5" height="18"/>
<rect x="1339" y="663" width="5" height="27"/>
<rect x="1347" y="663" width="5" height="25"/>
<rect x="1355" y="663" width="5" height="32"/>
<rect x="1363" y="663" width="5" height="36"/>
<rect x="1371" y="663" width="5" height="33"/>
<rect x="1379" y="663" width="5" height="25"/>
<rect x="1387" y="663" width="5" height="25"/>
<rect x="1395" y="663" width="5" height="21"/>
<rect x="1403" y="663" width="5" height="9"/>
<rect x="1411" y="663" width="5" height="4"/>
<rect x="1419" y="662" width="5" height="1"/>
<rect x="1427" y="661" width="5" height="2"/>
<rect x="1435" y="659" width="5" height="4"/>
<rect x="1443" y="663" width="5" height="24"/>
<rect x="1451" y="663" width="5" height="45"/>
<rect x="1459" y="663" width="5" height="62"/>
<rect x="1467" y="663" width="5" height="62"/>
<rect x="1475" y="663" width="5" height="47"/>
<rect x="1483" y="663" width="5" height="39"/>
<rect x="1491" y="663" width="5" height="25"/>
<rect x="1499" y="663" width="5" height="15"/>
<rect x="1507" y="663" width="5" height="6"/>
<rect x="1515" y="658" width="5" height="5"/>
<rect x="1523" y="644" width="5" height="19"/>
<rect x="1531" y="633" width="5" height="30"/>
<rect x="1539" y="628" width="5" height="35"/>
<rect x="1547" y="629" width="5" height="34"/>
<rect x="1555" y="624" width="5" height="39"/>
<rect x="1563" y="620" width="5" height="43"/>
<rect x="1571" y="617" width="5" height="46"/>
<rect x="1579" y="618" width="5" height="45"/>
<rect x="1587" y="622" width="5" height="41"/>
<rect x="1595" y="622" width="5" height="41"/>
<rect x="1603" y="620" width="5" height="43"/>
<rect x="1611" y="625" width="5" height="38"/>
<rect x="1619" y="629" width="5" height="34"/>
<rect x="1627" y="644" width="5" height="19"/>
<rect x="1635" y="655" width="5" height="8"/>
<rect x="1643" y="661" width="5" height="2"/>
<rect x="1651" y="661" width="5" height="2"/>
<rect x="1659" y="649" width="5" height="14"/>
<rect x="1667" y="642" width="5" height="21"/>
<rect x="1675" y="635" width="5" height="28"/>
<rect x="1683" y="631" width="5" height="32"/>
<rect x="1691" y="624" width="5" height="39"/>
<rect x="1699" y="623" width="5" height="40"/>
<rect x="1707" y="625" width="5" height="38"/>
<rect x="1715" y="631" width="5" height="32"/>
<rect x="1723" y="640" width="5" height="23"/>
<rect x="1731" y="646" width="5" height="17"/>
<rect x="1739" y="646" width="5" height="17"/>
<rect x="1747" y="647" width="5" height="16"/>
<rect x="1755" y="647" width="5" height="16"/>
<rect x="1763" y="651" width="5" height="12"/>
<rect x="1771" y="659" width="5" height="4"/>
<rect x="1779" y="661" width="5" height="2"/>
<rect x="1787" y="663" width="5" height="1"/>
<rect x="1795" y="663" width="5" height="7"/>
<rect x="1803" y="663" width="5" height="9"/>
<rect x="1811" y="663" width="5" height="9"/>
<rect x="1819" y="659" width="5" height="4"/>
<rect x="1827" y="646" width="5" height="17"/>
<rect x="1835" y="649" width="5" height="14"/>
<rect x="1843" y="655" width="5" height="8"/>
<rect x="1851" y="663" width="5" height="2"/>
</g>
<g clip-path="url(#c3)" shape-rendering="crispEdges">
<polyline points="5.5,787.8 13.5,792.8 21.5,790.5 29.5,793.0 37.5,782.8 45.5,783.0 53.5,773.0 61.5,805.5 69.5,808.6 77.5,819.9 85.5,790.2 93.5,802.8 101.5,804.0 109.5,801.8 117.5,805.8 125.5,804.9 133.5,812.8 141.5,817.8 149.5,819.2 157.5,813.0 165.5,825.8 173.5,827.0 181.5,814.2 189.5,785.8 197.5,794.2 205.5,803.0 213.5,813.6 221.5,828.0 229.5,811.8 237.5,796.8 245.5,807.3 253.5,817.5 261.5,809.7 269.5,828.6 277.5,810.6 285.5,790.2 293.5,788.8 301.5,794.1 309.5,802.9 317.5,806.6 325.5,815.5 333.5,815.5 341.5,820.6 349.5,791.3 357.5,776.5 365.5,786.1 373.5,777.9 381.5,777.7 389.5,782.0 397.5,789.3 405.5,791.1 413.5,789.2 421.5,775.9 429.5,778.9 437.5,784.3 445.5,757.2 453.5,755.6 461.5,759.8 469.5,759.8 477.5,773.0 485.5,770.1 493.5,776.3 501.5,768.3 509.5,769.0 517.5,763.1 525.5,769.5 533.5,753.9 541.5,741.9 549.5,760.7 557.5,773.8 565.5,765.2 573.5,758.0 581.5,749.5 589.5,767.9 597.5,769.1 605.5,771.4 613.5,781.4 621.5,772.5 629.5,796.7 637.5,792.5 645.5,794.4 653.5,771.9 661.5,794.6 669.5,791.0 677.5,775.9 685.5,805.2 693.5,790.0 701.5,778.2 709.5,781.2 717.5,776.6 725.5,785.6 733.5,783.0 741.5,769.9 749.5,762.0 757.5,757.8 765.5,765.4 773.5,771.4 781.5,769.4 789.5,804.2 797.5,799.0 805.5,800.1 813.5,802.0 821.5,793.3 829.5,805.8 837.5,815.4 845.5,795.8 853.5,797.4 861.5,774.8 869.5,768.1 877.5,771.9 885.5,785.9 893.5,797.8 901.5,800.0 909.5,796.2 917.5,805.4 925.5,796.3 933.5,793.3 941.5,794.8 949.5,816.8 957.5,823.3 965.5,834.6 973.5,830.5 981.5,832.6 989.5,837.3 997.5,845.9 1005.5,846.6 1013.5,836.7 1021.5,813.8 1029.5,786.6 1037.5,799.1 1045.5,795.5 1053.5,791.0 1061.5,797.0 1069.5,798.7 1077.5,809.6 1085.5,787.7 1093.5,787.9 1101.5,794.1 1109.5,801.4 1117.5,819.5 1125.5,820.5 1133.5,822.5 1141.5,811.7 1149.5,800.5 1157.5,789.5 1165.5,791.5 1173.5,793.8 1181.5,797.5 1189.5,793.7 1197.5,785.5 1205.5,781.3 1213.5,796.2 1221.5,785.7 1229.5,768.1 1237.5,752.9 1245.5,755.4 1253.5,759.4 1261.5,824.9 1269.5,830.4 1277.5,821.7 1285.5,824.2 1293.5,825.3 1301.5,835.8 1309.5,835.8 1317.5,801.2 1325.5,814.1 1333.5,829.7 1341.5,837.4 1349.5,828.3 1357.5,838.8 1365.5,841.9 1373.5,836.3 1381.5,834.3 1389.5,843.1 1397.5,844.9 1405.5,827.7 1413.5,833.6 1421.5,835.3 1429.5,839.9 1437.5,840.0 1445.5,860.5 1453.5,863.3 1461.5,865.8 1469.5,860.9 1477.5,843.5 1485.5,848.7 1493.5,848.8 1501.5,852.3 1509.5,854.8 1517.5,853.7 1525.5,839.2 1533.5,836.8 1541.5,839.9 1549.5,844.6 1557.5,831.3 1565.5,827.6 1573.5,825.2 1581.5,826.4 1589.5,830.7 1597.5,817.3 1605.5,808.5 1613.5,816.9 1621.5,816.9 1629.5,835.7 1637.5,837.6 1645.5,838.1 1653.5,827.1 1661.5,789.0 1669.5,792.2 1677.5,787.0 1685.5,785.7 1693.5,772.8 1701.5,776.2 1709.5,772.7 1717.5,777.8 1725.5,783.4 1733.5,780.1 1741.5,764.1 1749.5,761.9 1757.5,757.1 1765.5,771.0 1773.5,786.2 1781.5,776.9 1789.5,781.0 1797.5,792.3 1805.5,787.0 1813.5,781.3 1821.5,749.2 1829.5,742.2 1837.5,776.2 1845.5,781.6 1853.5,793.2" fill="none" stroke="#00e8f0" stroke-width="1" />
<polyline points="549.5,747.5 965.0,773.0" fill="none" stroke="#ffff00" stroke-width="2" />
</g>
<g clip-path="url(#c2)" shape-rendering="crispEdges">
<polyline points="530.0,612.7 982.0,660.7" fill="none" stroke="#ffff00" stroke-width="2" />
</g>
<g shape-rendering="crispEdges" stroke="#a8a8a8" stroke-dasharray="3 3" stroke-width="1">
<line x1="5" y1="520.5" x2="1854" y2="520.5"/>
<line x1="5" y1="586.5" x2="1854" y2="586.5"/>
<line x1="5" y1="751.5" x2="1854" y2="751.5"/>
<line x1="5" y1="789.5" x2="1854" y2="789.5"/>
<line x1="5" y1="827.5" x2="1854" y2="827.5"/>
</g>
<path d="M8.5 12 L17.5 12 L13 17.5 Z" fill="#868686"/>
<text x="23" y="19" font-size="12.5" fill="#7e7e7e" font-family="Liberation Sans, Arial, sans-serif" text-anchor="start" textLength="102" lengthAdjust="spacingAndGlyphs">AUDUSDmicro,M30</text>
<text x="134.25" y="19" font-size="12.5" fill="#7e7e7e" font-family="Liberation Sans, Arial, sans-serif" text-anchor="start" textLength="44.8" lengthAdjust="spacingAndGlyphs">0.65006</text>
<text x="184.25" y="19" font-size="12.5" fill="#7e7e7e" font-family="Liberation Sans, Arial, sans-serif" text-anchor="start" textLength="44.8" lengthAdjust="spacingAndGlyphs">0.65012</text>
<text x="234.25" y="19" font-size="12.5" fill="#7e7e7e" font-family="Liberation Sans, Arial, sans-serif" text-anchor="start" textLength="44.8" lengthAdjust="spacingAndGlyphs">0.64971</text>
<text x="284.25" y="19" font-size="12.5" fill="#7e7e7e" font-family="Liberation Sans, Arial, sans-serif" text-anchor="start" textLength="44.8" lengthAdjust="spacingAndGlyphs">0.65006</text>
<text x="9.4" y="513" font-size="12.5" fill="#7e7e7e" font-family="Liberation Sans, Arial, sans-serif" text-anchor="start" textLength="69.6" lengthAdjust="spacingAndGlyphs">Stoch(8,3,3)</text>
<text x="84.75" y="513" font-size="12.5" fill="#7e7e7e" font-family="Liberation Sans, Arial, sans-serif" text-anchor="start" textLength="44.7" lengthAdjust="spacingAndGlyphs">57.6705</text>
<text x="134.75" y="513" font-size="12.5" fill="#7e7e7e" font-family="Liberation Sans, Arial, sans-serif" text-anchor="start" textLength="44.8" lengthAdjust="spacingAndGlyphs">57.1389</text>
<text x="9.3" y="627" font-size="12.5" fill="#7e7e7e" font-family="Liberation Sans, Arial, sans-serif" text-anchor="start" textLength="76.7" lengthAdjust="spacingAndGlyphs">OsMA(8,17,9)</text>
<text x="90.7" y="627" font-size="12.5" fill="#7e7e7e" font-family="Liberation Sans, Arial, sans-serif" text-anchor="start" textLength="59.3" lengthAdjust="spacingAndGlyphs">0.0000806</text>
<text x="9.4" y="749" font-size="12.5" fill="#7e7e7e" font-family="Liberation Sans, Arial, sans-serif" text-anchor="start" textLength="41.2" lengthAdjust="spacingAndGlyphs">RSI(10)</text>
<text x="55.6" y="749" font-size="12.5" fill="#7e7e7e" font-family="Liberation Sans, Arial, sans-serif" text-anchor="start" textLength="45" lengthAdjust="spacingAndGlyphs">55.5979</text>
<g shape-rendering="crispEdges">
<rect x="1855" y="35" width="2" height="1" fill="#9a9a9a"/>
<rect x="1855" y="84" width="2" height="1" fill="#9a9a9a"/>
<rect x="1855" y="133" width="2" height="1" fill="#9a9a9a"/>
<rect x="1855" y="182" width="2" height="1" fill="#9a9a9a"/>
<rect x="1855" y="231" width="2" height="1" fill="#9a9a9a"/>
<rect x="1855" y="280" width="2" height="1" fill="#9a9a9a"/>
<rect x="1855" y="329" width="2" height="1" fill="#9a9a9a"/>
<rect x="1855" y="378" width="2" height="1" fill="#9a9a9a"/>
<rect x="1855" y="427" width="2" height="1" fill="#9a9a9a"/>
<rect x="1855" y="476" width="2" height="1" fill="#9a9a9a"/>
</g>
<text x="1861.5" y="40" font-size="12.5" fill="#7e7e7e" font-family="Liberation Sans, Arial, sans-serif" text-anchor="start" textLength="45" lengthAdjust="spacingAndGlyphs">0.67715</text>
<text x="1861.5" y="89" font-size="12.5" fill="#7e7e7e" font-family="Liberation Sans, Arial, sans-serif" text-anchor="start" textLength="45" lengthAdjust="spacingAndGlyphs">0.67490</text>
<text x="1861.5" y="138" font-size="12.5" fill="#7e7e7e" font-family="Liberation Sans, Arial, sans-serif" text-anchor="start" textLength="45" lengthAdjust="spacingAndGlyphs">0.67270</text>
<text x="1861.5" y="187" font-size="12.5" fill="#7e7e7e" font-family="Liberation Sans, Arial, sans-serif" text-anchor="start" textLength="45" lengthAdjust="spacingAndGlyphs">0.67045</text>
<text x="1861.5" y="236" font-size="12.5" fill="#7e7e7e" font-family="Liberation Sans, Arial, sans-serif" text-anchor="start" textLength="45" lengthAdjust="spacingAndGlyphs">0.66820</text>
<text x="1861.5" y="285" font-size="12.5" fill="#7e7e7e" font-family="Liberation Sans, Arial, sans-serif" text-anchor="start" textLength="45" lengthAdjust="spacingAndGlyphs">0.66600</text>
<text x="1861.5" y="334" font-size="12.5" fill="#7e7e7e" font-family="Liberation Sans, Arial, sans-serif" text-anchor="start" textLength="45" lengthAdjust="spacingAndGlyphs">0.66375</text>
<text x="1861.5" y="383" font-size="12.5" fill="#7e7e7e" font-family="Liberation Sans, Arial, sans-serif" text-anchor="start" textLength="45" lengthAdjust="spacingAndGlyphs">0.66150</text>
<text x="1861.5" y="432" font-size="12.5" fill="#7e7e7e" font-family="Liberation Sans, Arial, sans-serif" text-anchor="start" textLength="45" lengthAdjust="spacingAndGlyphs">0.65930</text>
<text x="1861.5" y="481" font-size="12.5" fill="#7e7e7e" font-family="Liberation Sans, Arial, sans-serif" text-anchor="start" textLength="45" lengthAdjust="spacingAndGlyphs">0.65705</text>
<text x="1858.5" y="511" font-size="12.5" fill="#7e7e7e" font-family="Liberation Sans, Arial, sans-serif" text-anchor="start" textLength="20" lengthAdjust="spacingAndGlyphs">100</text>
<text x="1858.5" y="525" font-size="12.5" fill="#7e7e7e" font-family="Liberation Sans, Arial, sans-serif" text-anchor="start" textLength="12.5" lengthAdjust="spacingAndGlyphs">80</text>
<text x="1858.5" y="591" font-size="12.5" fill="#7e7e7e" font-family="Liberation Sans, Arial, sans-serif" text-anchor="start" textLength="12.5" lengthAdjust="spacingAndGlyphs">20</text>
<text x="1858.5" y="605.5" font-size="12.5" fill="#7e7e7e" font-family="Liberation Sans, Arial, sans-serif" text-anchor="start" textLength="6" lengthAdjust="spacingAndGlyphs">0</text>
<text x="1859" y="625" font-size="12.5" fill="#7e7e7e" font-family="Liberation Sans, Arial, sans-serif" text-anchor="start" textLength="58.5" lengthAdjust="spacingAndGlyphs">0.0005895</text>
<text x="1859" y="667.5" font-size="12.5" fill="#7e7e7e" font-family="Liberation Sans, Arial, sans-serif" text-anchor="start" textLength="23.5" lengthAdjust="spacingAndGlyphs">0.00</text>
<text x="1859" y="728" font-size="12.5" fill="#7e7e7e" font-family="Liberation Sans, Arial, sans-serif" text-anchor="start" textLength="63.5" lengthAdjust="spacingAndGlyphs">-0.0007881</text>
<text x="1859" y="747" font-size="12.5" fill="#7e7e7e" font-family="Liberation Sans, Arial, sans-serif" text-anchor="start" textLength="45" lengthAdjust="spacingAndGlyphs">78.5738</text>
<text x="1859" y="756" font-size="12.5" fill="#7e7e7e" font-family="Liberation Sans, Arial, sans-serif" text-anchor="start" textLength="12.5" lengthAdjust="spacingAndGlyphs">70</text>
<text x="1859" y="794" font-size="12.5" fill="#7e7e7e" font-family="Liberation Sans, Arial, sans-serif" text-anchor="start" textLength="12.5" lengthAdjust="spacingAndGlyphs">50</text>
<text x="1859" y="832" font-size="12.5" fill="#7e7e7e" font-family="Liberation Sans, Arial, sans-serif" text-anchor="start" textLength="12.5" lengthAdjust="spacingAndGlyphs">30</text>
<text x="1859" y="869" font-size="12.5" fill="#7e7e7e" font-family="Liberation Sans, Arial, sans-serif" text-anchor="start" textLength="37" lengthAdjust="spacingAndGlyphs">6.7497</text>
<g shape-rendering="crispEdges">
<rect x="5" y="873" width="1" height="3" fill="#9a9a9a"/>
<rect x="101" y="873" width="1" height="3" fill="#9a9a9a"/>
<rect x="197" y="873" width="1" height="3" fill="#9a9a9a"/>
<rect x="293" y="873" width="1" height="3" fill="#9a9a9a"/>
<rect x="389" y="873" width="1" height="3" fill="#9a9a9a"/>
<rect x="485" y="873" width="1" height="3" fill="#9a9a9a"/>
<rect x="581" y="873" width="1" height="3" fill="#9a9a9a"/>
<rect x="677" y="873" width="1" height="3" fill="#9a9a9a"/>
<rect x="773" y="873" width="1" height="3" fill="#9a9a9a"/>
<rect x="869" y="873" width="1" height="3" fill="#9a9a9a"/>
<rect x="965" y="873" width="1" height="3" fill="#9a9a9a"/>
<rect x="1061" y="873" width="1" height="3" fill="#9a9a9a"/>
<rect x="1157" y="873" width="1" height="3" fill="#9a9a9a"/>
<rect x="1253" y="873" width="1" height="3" fill="#9a9a9a"/>
<rect x="1349" y="873" width="1" height="3" fill="#9a9a9a"/>
<rect x="1445" y="873" width="1" height="3" fill="#9a9a9a"/>
<rect x="1541" y="873" width="1" height="3" fill="#9a9a9a"/>
<rect x="1637" y="873" width="1" height="3" fill="#9a9a9a"/>
<rect x="1733" y="873" width="1" height="3" fill="#9a9a9a"/>
<rect x="1829" y="873" width="1" height="3" fill="#9a9a9a"/>
</g>
<text x="5" y="888" font-size="12.5" fill="#7e7e7e" font-family="Liberation Sans, Arial, sans-serif" text-anchor="start" textLength="60.5" lengthAdjust="spacingAndGlyphs">1 Mar 2023</text>
<text x="101" y="888" font-size="12.5" fill="#7e7e7e" font-family="Liberation Sans, Arial, sans-serif" text-anchor="start" textLength="64.5" lengthAdjust="spacingAndGlyphs">2 Mar 05:00</text>
<text x="197" y="888" font-size="12.5" fill="#7e7e7e" font-family="Liberation Sans, Arial, sans-serif" text-anchor="start" textLength="64.5" lengthAdjust="spacingAndGlyphs">2 Mar 11:00</text>
<text x="293" y="888" font-size="12.5" fill="#7e7e7e" font-family="Liberation Sans, Arial, sans-serif" text-anchor="start" textLength="64.5" lengthAdjust="spacingAndGlyphs">2 Mar 17:00</text>
<text x="389" y="888" font-size="12.5" fill="#7e7e7e" font-family="Liberation Sans, Arial, sans-serif" text-anchor="start" textLength="64.5" lengthAdjust="spacingAndGlyphs">2 Mar 23:00</text>
<text x="485" y="888" font-size="12.5" fill="#7e7e7e" font-family="Liberation Sans, Arial, sans-serif" text-anchor="start" textLength="64.5" lengthAdjust="spacingAndGlyphs">3 Mar 05:00</text>
<text x="581" y="888" font-size="12.5" fill="#7e7e7e" font-family="Liberation Sans, Arial, sans-serif" text-anchor="start" textLength="64.5" lengthAdjust="spacingAndGlyphs">3 Mar 11:00</text>
<text x="677" y="888" font-size="12.5" fill="#7e7e7e" font-family="Liberation Sans, Arial, sans-serif" text-anchor="start" textLength="64.5" lengthAdjust="spacingAndGlyphs">3 Mar 17:00</text>
<text x="773" y="888" font-size="12.5" fill="#7e7e7e" font-family="Liberation Sans, Arial, sans-serif" text-anchor="start" textLength="64.5" lengthAdjust="spacingAndGlyphs">3 Mar 23:00</text>
<text x="869" y="888" font-size="12.5" fill="#7e7e7e" font-family="Liberation Sans, Arial, sans-serif" text-anchor="start" textLength="64.5" lengthAdjust="spacingAndGlyphs">6 Mar 05:00</text>
<text x="965" y="888" font-size="12.5" fill="#7e7e7e" font-family="Liberation Sans, Arial, sans-serif" text-anchor="start" textLength="64.5" lengthAdjust="spacingAndGlyphs">6 Mar 11:00</text>
<text x="1061" y="888" font-size="12.5" fill="#7e7e7e" font-family="Liberation Sans, Arial, sans-serif" text-anchor="start" textLength="64.5" lengthAdjust="spacingAndGlyphs">6 Mar 17:00</text>
<text x="1157" y="888" font-size="12.5" fill="#7e7e7e" font-family="Liberation Sans, Arial, sans-serif" text-anchor="start" textLength="64.5" lengthAdjust="spacingAndGlyphs">6 Mar 23:00</text>
<text x="1253" y="888" font-size="12.5" fill="#7e7e7e" font-family="Liberation Sans, Arial, sans-serif" text-anchor="start" textLength="64.5" lengthAdjust="spacingAndGlyphs">7 Mar 05:00</text>
<text x="1349" y="888" font-size="12.5" fill="#7e7e7e" font-family="Liberation Sans, Arial, sans-serif" text-anchor="start" textLength="64.5" lengthAdjust="spacingAndGlyphs">7 Mar 11:00</text>
<text x="1445" y="888" font-size="12.5" fill="#7e7e7e" font-family="Liberation Sans, Arial, sans-serif" text-anchor="start" textLength="64.5" lengthAdjust="spacingAndGlyphs">7 Mar 17:00</text>
<text x="1541" y="888" font-size="12.5" fill="#7e7e7e" font-family="Liberation Sans, Arial, sans-serif" text-anchor="start" textLength="64.5" lengthAdjust="spacingAndGlyphs">7 Mar 23:00</text>
<text x="1637" y="888" font-size="12.5" fill="#7e7e7e" font-family="Liberation Sans, Arial, sans-serif" text-anchor="start" textLength="64.5" lengthAdjust="spacingAndGlyphs">8 Mar 05:00</text>
<text x="1733" y="888" font-size="12.5" fill="#7e7e7e" font-family="Liberation Sans, Arial, sans-serif" text-anchor="start" textLength="64.5" lengthAdjust="spacingAndGlyphs">8 Mar 11:00</text>
<text x="1829" y="888" font-size="12.5" fill="#7e7e7e" font-family="Liberation Sans, Arial, sans-serif" text-anchor="start" textLength="64.5" lengthAdjust="spacingAndGlyphs">8 Mar 17:00</text>
<rect x="910" y="876" width="110" height="14" fill="#ffffff" shape-rendering="crispEdges"/>
<text x="915" y="888" font-size="12.5" fill="#000020" font-family="Liberation Sans, Arial, sans-serif" text-anchor="start" textLength="99.4" lengthAdjust="spacingAndGlyphs">2023.03.06 11:00</text>
<path d="M965.5 872 L972 866 L978.5 872 Z" fill="#808080"/>
<rect x="1794.5" y="20.5" width="39" height="19" fill="#0000ff" stroke="#9a00a8" stroke-width="1"/>
<text x="1797.5" y="35" font-size="13.3" fill="#ffffff" font-family="Liberation Sans, Arial, sans-serif" text-anchor="start" textLength="32" lengthAdjust="spacingAndGlyphs">Show</text>
</svg>
</body></html>
